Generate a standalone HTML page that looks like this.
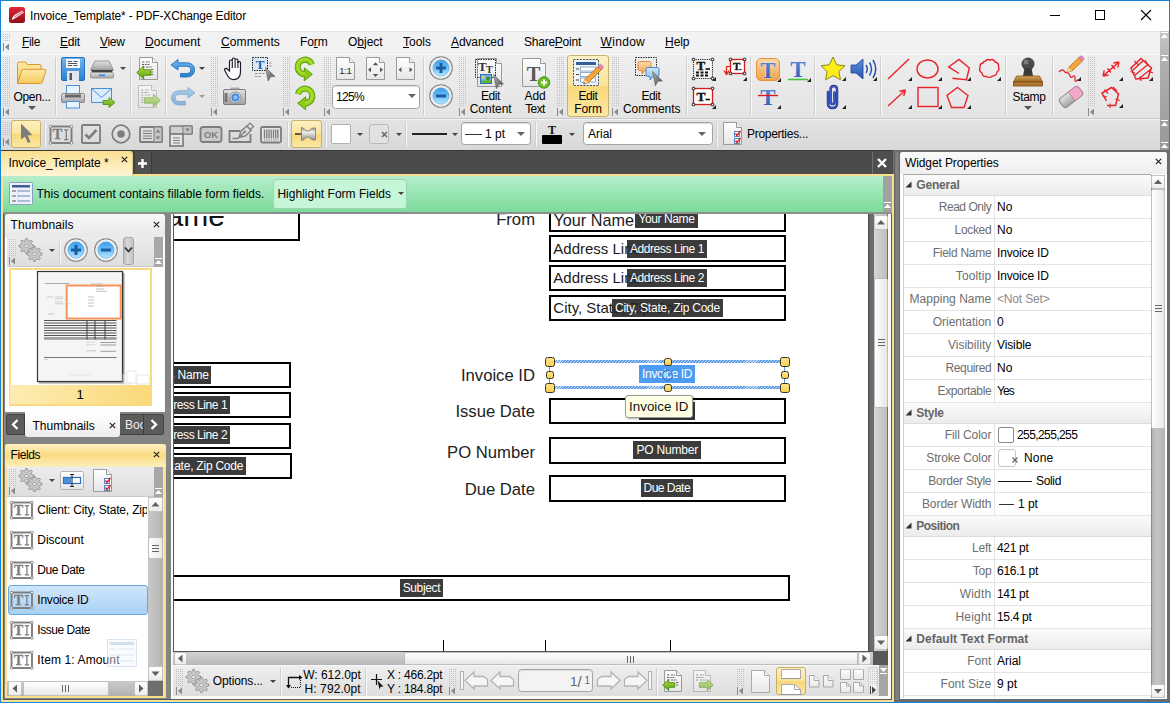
<!DOCTYPE html><html><head><meta charset="utf-8"><title>PDF-XChange Editor</title><style>
*{box-sizing:border-box;margin:0;padding:0}
html,body{width:1170px;height:703px;overflow:hidden;background:#fff}
body{position:relative;font-family:"Liberation Sans",sans-serif;font-size:12px;color:#000}
.a{position:absolute}
.t{position:absolute;white-space:nowrap;line-height:14px;height:14px}
.u{text-decoration:underline}
svg{position:absolute;overflow:visible}
#win{left:0;top:0;width:1170px;height:703px;border:1px solid #1883d7;background:#fff}
#menubar{left:1px;top:31px;width:1168px;height:23px;background:#f2f2f2;border-top:1px solid #e3e3e3}
#tb1{left:1px;top:54px;width:1168px;height:65px;background:linear-gradient(#eeeeee,#e4e4e4);border-top:1px solid #fafafa;border-bottom:1px solid #c9c9c9}
#tb2{left:1px;top:119px;width:1168px;height:31px;background:linear-gradient(#e3e3e3,#d8d8d8);border-top:1px solid #f2f2f2}
#tbr{left:1160px;top:31px;width:9px;height:119px;background:linear-gradient(#c8c8c8,#b0b0b0 25%,#989898)}
#work{left:1px;top:150px;width:1168px;height:552px;background:#6c6c6c}
.grip{position:absolute;width:7px;background-image:radial-gradient(circle,#a8a8a8 0.6px,transparent 0.9px);background-size:2px 2px}
.sep{position:absolute;width:2px;border-left:1px solid #cfcfcf;border-right:1px solid #f8f8f8}
.dd{position:absolute;width:0;height:0;border-left:3px solid transparent;border-right:3px solid transparent;border-top:3px solid #444}
.dd2{position:absolute;width:0;height:0;border-left:4px solid transparent;border-right:4px solid transparent;border-top:4px solid #555}
.act{position:absolute;border:1px solid #c9b06a;border-radius:3px;background:linear-gradient(#fdf0c2 0%,#fbe49a 48%,#f9d877 52%,#fbe9a8 100%)}
.combo{position:absolute;background:#fff;border:1px solid #a4a4a4;border-radius:3.500px;box-shadow:inset 0 1px 1px #dcdcdc}
.lbl{position:absolute;white-space:nowrap;line-height:13px;text-align:center;font-size:12px}
</style></head><body>
<div class="a" id="win"></div>
<svg width="0" height="0" style="left:0;top:0"><defs>
<linearGradient id="gFold" x1="0" y1="0" x2="0" y2="1"><stop offset="0" stop-color="#fde9a6"/><stop offset="1" stop-color="#f6c95c"/></linearGradient>
<linearGradient id="gBlue" x1="0" y1="0" x2="0" y2="1"><stop offset="0" stop-color="#6fb8ee"/><stop offset="1" stop-color="#2a7fd0"/></linearGradient>
<linearGradient id="gBlueL" x1="0" y1="0" x2="0" y2="1"><stop offset="0" stop-color="#cfe4f7"/><stop offset="1" stop-color="#8fbde6"/></linearGradient>
<linearGradient id="gGreen" x1="0" y1="0" x2="0" y2="1"><stop offset="0" stop-color="#b4e04a"/><stop offset="1" stop-color="#5a9e10"/></linearGradient>
<linearGradient id="gGreenL" x1="0" y1="0" x2="0" y2="1"><stop offset="0" stop-color="#d6ecad"/><stop offset="1" stop-color="#a9cf78"/></linearGradient>
<linearGradient id="gGray" x1="0" y1="0" x2="0" y2="1"><stop offset="0" stop-color="#e4e4e4"/><stop offset="1" stop-color="#a0a0a0"/></linearGradient>
<linearGradient id="gPage" x1="0" y1="0" x2="0" y2="1"><stop offset="0" stop-color="#ffffff"/><stop offset="1" stop-color="#e6e6e6"/></linearGradient>
<linearGradient id="gCirc" x1="0" y1="0" x2="0" y2="1"><stop offset="0" stop-color="#ffffff"/><stop offset="1" stop-color="#c9dcef"/></linearGradient>
<linearGradient id="gOr" x1="0" y1="0" x2="0" y2="1"><stop offset="0" stop-color="#fbd9a8"/><stop offset="1" stop-color="#f0a04a"/></linearGradient>
<linearGradient id="gWood" x1="0" y1="0" x2="0" y2="1"><stop offset="0" stop-color="#d9a35c"/><stop offset="1" stop-color="#9a6424"/></linearGradient>
<linearGradient id="gT" x1="0" y1="0" x2="0" y2="1"><stop offset="0" stop-color="#5c8fe0"/><stop offset="1" stop-color="#2a55b0"/></linearGradient>
<pattern id="dots" width="2" height="2" patternUnits="userSpaceOnUse"><rect width="1" height="1" fill="#c2c2c2"/></pattern>
<linearGradient id="gZ" x1="0" y1="0" x2="0" y2="1"><stop offset="0" stop-color="#3c9ce8"/><stop offset=".5" stop-color="#6cc0f8"/><stop offset="1" stop-color="#b4e6ff"/></linearGradient>
<linearGradient id="gPin" x1="0" y1="0" x2="0" y2="1"><stop offset="0" stop-color="#8c8c8c"/><stop offset=".35" stop-color="#f0f0f0"/><stop offset="1" stop-color="#8a8a8a"/></linearGradient>
<linearGradient id="gGrayL" x1="0" y1="0" x2="0" y2="1"><stop offset="0" stop-color="#f0f0f0"/><stop offset="1" stop-color="#bcbcbc"/></linearGradient>
<linearGradient id="gCur" x1="0" y1="0" x2="1" y2="1"><stop offset="0" stop-color="#b4b4b4"/><stop offset="1" stop-color="#4a4a4a"/></linearGradient>
</defs></svg>
<svg style="left:9px;top:7px" width="16" height="16" viewBox="0 0 16 16"><defs><linearGradient id="lg" x1="0" y1="0" x2="0" y2="1"><stop offset="0" stop-color="#e3263a"/><stop offset="1" stop-color="#8e1018"/></linearGradient></defs><rect width="16" height="16" rx="2.5" fill="url(#lg)"/><path d="M3 12.6l1.5-3.4 9-5 .9 1.4-8.6 5.6zM5.4 8.4l8-4.6" fill="#fff" stroke="#fff" stroke-width=".6"/><path d="M5.2 10.2l8.6-5.3" stroke="#b3202c" stroke-width=".7" fill="none"/></svg><div class="t" style="left:30px;top:9px;;letter-spacing:-0.143px">Invoice_Template* - PDF-XChange Editor</div><svg style="left:1050px;top:10px" width="12" height="12"><path d="M0 5.5h10" stroke="#000"/></svg><svg style="left:1095px;top:10px" width="12" height="12"><rect x=".5" y=".5" width="9" height="9" fill="none" stroke="#000"/></svg><svg style="left:1141px;top:10px" width="12" height="12"><path d="M0 0l10 10M10 0L0 10" stroke="#000" stroke-width="1.1"/></svg>
<div class="a" id="menubar"></div><svg style="left:3px;top:34px" width="7" height="8"><rect width="7" height="8" fill="url(#dots)"/></svg><svg style="left:3px;top:43px" width="7" height="8"><path d="M0.5 0v8" stroke="#8a8a8a" fill="none"/><path d="M6 0.5L2 4l4 3.5z" fill="#8a8a8a"/></svg><div class="t" style="left:22px;top:35px;;letter-spacing:-0.34px"><span class="u">F</span>ile</div><div class="t" style="left:60px;top:35px;;letter-spacing:-0.176px"><span class="u">E</span>dit</div><div class="t" style="left:100px;top:35px;;letter-spacing:-0.328px"><span class="u">V</span>iew</div><div class="t" style="left:145px;top:35px;;letter-spacing:0.1px"><span class="u">D</span>ocument</div><div class="t" style="left:221px;top:35px;;letter-spacing:0.121px"><span class="u">C</span>omments</div><div class="t" style="left:300px;top:35px;;letter-spacing:-0.079px">Fo<span class="u">r</span>m</div><div class="t" style="left:348px;top:35px;;letter-spacing:-0.003px">O<span class="u">b</span>ject</div><div class="t" style="left:403px;top:35px;;letter-spacing:-0.003px"><span class="u">T</span>ools</div><div class="t" style="left:451px;top:35px;;letter-spacing:-0.111px"><span class="u">A</span>dvanced</div><div class="t" style="left:524px;top:35px;;letter-spacing:-0.241px">Share<span class="u">P</span>oint</div><div class="t" style="left:600.5px;top:35px;;letter-spacing:0.319px"><span class="u">W</span>indow</div><div class="t" style="left:665px;top:35px;;letter-spacing:-0.047px"><span class="u">H</span>elp</div>
<div class="a" id="tb1"></div><svg style="left:3px;top:57px" width="7" height="49"><rect width="7" height="49" fill="url(#dots)"/></svg><svg style="left:3px;top:108px" width="7" height="8"><path d="M0.5 0v8" stroke="#8a8a8a" fill="none"/><path d="M6 0.5L2 4l4 3.5z" fill="#8a8a8a"/></svg><svg style="left:16px;top:60px" width="32" height="26" viewBox="0 0 32 26"><path d="M1.5 23.5V3.5q0-1.5 1.5-1.5h6.5l2 2.5h12q1.5 0 1.5 1.5v3" fill="url(#gFold)" stroke="#d9962c"/><path d="M1.5 23.5l4.2-13q.4-1.2 1.6-1.2h21.5q1.5 0 1.1 1.4l-3.6 11.6q-.4 1.2-1.6 1.2z" fill="url(#gFold)" stroke="#d9962c"/></svg><div class="lbl" style="left:-8px;width:80px;top:91px;;letter-spacing:-0.337px">Open...</div><div class="dd2" style="left:28px;top:106px"></div><div class="sep" style="left:55px;top:57px;height:58px"></div><svg style="left:61px;top:57px" width="24" height="24" viewBox="0 0 24 24"><rect x=".5" y=".5" width="23" height="23" rx="1.5" fill="url(#gBlue)" stroke="#1f6fbf"/><rect x="5" y="2" width="14" height="9" fill="#f4f8fc"/><path d="M7 4.5h4M12.5 4.5h4M7 6.5h9M7 8.5h4M12.5 8.5h4" stroke="#555" stroke-width="1"/><rect x="6" y="14" width="12" height="10" fill="#dfe8f2"/><rect x="8.5" y="16" width="2.5" height="7" fill="#555"/></svg><svg style="left:90px;top:58px" width="24" height="24" viewBox="0 0 24 24"><path d="M5 3h14l4.5 9h-23z" fill="url(#gGray)" stroke="#999"/><path d="M1 12h22l-1 2h-20z" fill="#444"/><rect x=".5" y="14.5" width="23" height="5.500" rx="1" fill="url(#gGray)" stroke="#999"/><rect x="9" y="16.500" width="6" height="1.500" fill="#2a8be6"/></svg><div class="dd" style="left:120px;top:67px;border-top-color:#444"></div><svg style="left:61px;top:85px" width="24" height="24" viewBox="0 0 24 24"><rect x="5.500" y=".5" width="13" height="9" fill="#e8f3fd" stroke="#4a90d9"/><rect x=".5" y="8.500" width="23" height="9" rx="1.500" fill="url(#gGray)" stroke="#8a8a8a"/><rect x="4" y="9.500" width="16" height="3" fill="#666"/><rect x="5.500" y="16.500" width="13" height="6.500" fill="#e8f3fd" stroke="#4a90d9"/></svg><svg style="left:91px;top:86px" width="26" height="24" viewBox="0 0 26 24"><rect x=".5" y="2.500" width="20" height="14" fill="#dcecfb" stroke="#4a90d9"/><path d="M.5 2.500l10 9 10-9" fill="none" stroke="#4a90d9"/><path d="M12 14.500h6v-3l6 5-6 5v-3h-6z" fill="url(#gGreen)" stroke="#4c8a0c" stroke-width=".8"/></svg><div class="sep" style="left:130px;top:57px;height:58px"></div><svg style="left:136px;top:57px" width="24" height="24" viewBox="0 0 24 24"><g transform="translate(3,0)"><path d="M.5 .5h13l5 5v17h-18z" fill="url(#gPage)" stroke="#9a9a9a"/><path d="M13.5 .5v5h5" fill="#f4f4f4" stroke="#9a9a9a"/><path d="M3 5h3M7 5h4M3 7.500h8M3 10h3M7 10h6M12 12.500h3M12 15h3M12 17.500h3" stroke="#666" stroke-dasharray="2 .7"/></g><path d="M.7 15.500l7-6.500v3.800h7v5.400h-7v3.800z" fill="url(#gGreen)" stroke="#4c8a0c" stroke-width=".9"/></svg><svg style="left:137px;top:85px" width="24" height="24" viewBox="0 0 24 24"><g opacity=".55"><g transform="translate(1,0)"><path d="M.5 .5h13l5 5v17h-18z" fill="url(#gPage)" stroke="#9a9a9a"/><path d="M13.5 .5v5h5" fill="#f4f4f4" stroke="#9a9a9a"/><path d="M3 5h3M7 5h4M3 7.500h8M3 10h3M7 10h6M3 12.500h3M3 15h3M3 17.500h3" stroke="#777" stroke-dasharray="2 .7"/></g><path d="M23.300 15.500l-7-6.500v3.800h-9v5.400h9v3.800z" fill="url(#gGreen)" stroke="#4c8a0c" stroke-width=".9"/></g></svg><div class="sep" style="left:165px;top:57px;height:58px"></div><svg style="left:170px;top:59px" width="26" height="20" viewBox="0 0 26 20"><g opacity="1"><path d="M1 6l7-5.500v3.300h8.500c5 0 8 2.800 8 7s-3 7.200-8 7.200h-6v-3.500h6c2.600 0 4.300-1.400 4.300-3.700s-1.700-3.500-4.300-3.500h-8.500v3.700z" fill="url(#gBlue)" stroke="#1f6fbf" stroke-width=".9"/></g></svg><div class="dd" style="left:199px;top:67px;border-top-color:#444"></div><svg style="left:170px;top:87px" width="26" height="20" viewBox="0 0 26 20"><g opacity="0.5" transform="translate(26,0) scale(-1,1)"><path d="M1 6l7-5.500v3.300h8.500c5 0 8 2.800 8 7s-3 7.200-8 7.200h-6v-3.500h6c2.600 0 4.300-1.400 4.300-3.700s-1.700-3.500-4.300-3.500h-8.500v3.700z" fill="url(#gBlue)" stroke="#1f6fbf" stroke-width=".9"/></g></svg><div class="dd" style="left:199px;top:95px;border-top-color:#999"></div><svg style="left:211px;top:57px" width="7" height="49"><rect width="7" height="49" fill="url(#dots)"/></svg><svg style="left:211px;top:108px" width="7" height="8"><path d="M0.5 0v8" stroke="#8a8a8a" fill="none"/><path d="M6 0.5L2 4l4 3.5z" fill="#8a8a8a"/></svg><svg style="left:223px;top:57px" width="22" height="24" viewBox="0 0 22 24"><path d="M6.500 14V4.500q0-1.500 1.400-1.500t1.400 1.500V2.500q0-1.500 1.400-1.500t1.400 1.500V3.500q0-1.500 1.400-1.500t1.400 1.500V6q0-1.400 1.300-1.400t1.300 1.400V15q0 4-2.200 6t-5.800 1.500q-3-.5-4.600-3.300L1.800 13.500q-.7-1.300.4-1.900t2 .4z" fill="#fff" stroke="#1a1a2a" stroke-width="1.200"/><path d="M9.300 4.500V11M12.100 3.500V11M14.900 4.500V11" stroke="#1a1a2a" stroke-width="1.100"/></svg><svg style="left:252px;top:57px" width="24" height="24" viewBox="0 0 24 24"><rect x=".5" y=".5" width="15" height="13" fill="#d9e8f5" stroke="#222" stroke-dasharray="1.500 1"/><path d="M3 16.500h10M3 19.500h7M17 6h3M17 9h3" stroke="#999" stroke-dasharray="2.500 1"/><text x="8" y="11.500" font-family="Liberation Serif,serif" font-weight="bold" font-size="13" fill="#1f5fae" text-anchor="middle">T</text><path d="M13.500 10.500l9.500 9-4.500.3-2.300 4.200z" fill="url(#gCur)" stroke="#4a4a4a" stroke-width=".5"/></svg><svg style="left:223px;top:87px" width="24" height="20" viewBox="0 0 24 20"><rect x="8" y="1" width="8" height="3" fill="#bbb" stroke="#888" stroke-width=".6"/><rect x=".5" y="2.500" width="22" height="15" rx="1.500" fill="url(#gGray)" stroke="#7d7d7d"/><rect x="1.500" y="6" width="3" height="9" fill="#777"/><circle cx="12.500" cy="10.500" r="5.500" fill="#e8e8e8" stroke="#888"/><circle cx="12.500" cy="10.500" r="3.800" fill="#4d94e8" stroke="#2a6bc0" stroke-width=".6"/><circle cx="12.500" cy="10.500" r="2" fill="#8fc0f5"/></svg><svg style="left:283px;top:57px" width="7" height="49"><rect width="7" height="49" fill="url(#dots)"/></svg><svg style="left:283px;top:108px" width="7" height="8"><path d="M0.5 0v8" stroke="#8a8a8a" fill="none"/><path d="M6 0.5L2 4l4 3.5z" fill="#8a8a8a"/></svg><svg style="left:292px;top:55px" width="26" height="28" viewBox="0 0 26 28"><path d="M19.860 9.500A7.300 7.300 0 1 0 13 19.300" fill="none" stroke="#5c9c0c" stroke-width="6.200"/><path d="M12.300 12.800L20.300 19.300l-8 6.500z" fill="#8ccc14" stroke="#5c9c0c" stroke-width="1"/><path d="M19.860 9.500A7.300 7.300 0 1 0 13 19.300" fill="none" stroke="#96d418" stroke-width="4.400"/><path d="M19.860 9.500A7.300 7.300 0 1 0 13 19.300" fill="none" stroke="#b6e64a" stroke-width="1.200" transform="translate(0,-.8)" opacity=".7"/></svg><svg style="left:292px;top:83.5px" width="26" height="28" viewBox="0 0 26 28"><path d="M5.950 10.100A7.300 7.300 0 1 1 13 19.300" fill="none" stroke="#5c9c0c" stroke-width="6.200"/><path d="M13.700 12.800L5.700 19.300l8 6.500z" fill="#8ccc14" stroke="#5c9c0c" stroke-width="1"/><path d="M5.950 10.100A7.300 7.300 0 1 1 13 19.300" fill="none" stroke="#96d418" stroke-width="4.400"/><path d="M5.950 10.100A7.300 7.300 0 1 1 13 19.300" fill="none" stroke="#b6e64a" stroke-width="1.200" transform="translate(0,-.8)" opacity=".7"/></svg><svg style="left:324px;top:57px" width="7" height="49"><rect width="7" height="49" fill="url(#dots)"/></svg><svg style="left:324px;top:108px" width="7" height="8"><path d="M0.5 0v8" stroke="#8a8a8a" fill="none"/><path d="M6 0.5L2 4l4 3.5z" fill="#8a8a8a"/></svg><svg style="left:336px;top:57.2px" width="20" height="24" viewBox="0 0 20 24"><path d="M.5 .5h13l5 5v17h-18z" fill="url(#gPage)" stroke="#9a9a9a"/><path d="M13.5 .5v5h5" fill="#f4f4f4" stroke="#9a9a9a"/><text x="9.300" y="16.800" font-size="9.500" font-family="Liberation Sans,sans-serif" text-anchor="middle" fill="#2a2a2a" letter-spacing="-.3">1:1</text></svg><svg style="left:366px;top:57.2px" width="20" height="24" viewBox="0 0 20 24"><path d="M.5 .5h13l5 5v17h-18z" fill="url(#gPage)" stroke="#9a9a9a"/><path d="M13.5 .5v5h5" fill="#f4f4f4" stroke="#9a9a9a"/><path d="M9.500 5.300l-2.700 3h5.400zM9.500 20l-2.700-3h5.400zM2 12.700l3-2.500v5zM17 12.700l-3-2.500v5z" fill="#555"/></svg><svg style="left:396px;top:57.2px" width="20" height="24" viewBox="0 0 20 24"><path d="M.5 .5h13l5 5v17h-18z" fill="url(#gPage)" stroke="#9a9a9a"/><path d="M13.5 .5v5h5" fill="#f4f4f4" stroke="#9a9a9a"/><path d="M2.500 12.700l3-2.500v5zM16.500 12.700l-3-2.500v5z" fill="#555"/></svg><div class="combo" style="left:332px;top:85px;width:88px;height:24px"></div><div class="t" style="left:336px;top:90px;;letter-spacing:-0.676px">125%</div><div class="dd2" style="left:407.500px;top:94px;border-top-color:#666"></div><div class="sep" style="left:423px;top:57px;height:58px"></div><svg style="left:428.5px;top:56.2px" width="24" height="24" viewBox="0 0 24 24"><circle cx="12" cy="12" r="11.200" fill="#fff" stroke="#8a8a8a" stroke-width="1.300"/><circle cx="12" cy="12" r="9.800" fill="none" stroke="#ececec" stroke-width="1.400"/><circle cx="12" cy="12" r="8.200" fill="url(#gZ)" stroke="#5aa0dc" stroke-width=".6"/><path d="M7 12h10" stroke="#1a5c9e" stroke-width="3"/><path d="M12 7v10" stroke="#1a5c9e" stroke-width="3"/></svg><svg style="left:428.5px;top:84.4px" width="24" height="24" viewBox="0 0 24 24"><circle cx="12" cy="12" r="11.200" fill="#fff" stroke="#8a8a8a" stroke-width="1.300"/><circle cx="12" cy="12" r="9.800" fill="none" stroke="#ececec" stroke-width="1.400"/><circle cx="12" cy="12" r="8.200" fill="url(#gZ)" stroke="#5aa0dc" stroke-width=".6"/><path d="M7 12h10" stroke="#1a5c9e" stroke-width="3"/></svg><svg style="left:459px;top:57px" width="7" height="49"><rect width="7" height="49" fill="url(#dots)"/></svg><svg style="left:459px;top:108px" width="7" height="8"><path d="M0.5 0v8" stroke="#8a8a8a" fill="none"/><path d="M6 0.5L2 4l4 3.5z" fill="#8a8a8a"/></svg><svg style="left:474px;top:57px" width="32" height="32" viewBox="0 0 32 32"><g transform="translate(3,1)"><path d="M.5 .5h19l5 5v23h-24z" fill="url(#gPage)" stroke="#9a9a9a"/><path d="M19.5 .5v5h5" fill="#f4f4f4" stroke="#9a9a9a"/></g><rect x="1.500" y="2.500" width="20" height="18" fill="none" stroke="#222" stroke-dasharray="1.500 1"/><text x="4" y="14" font-family="Liberation Serif,serif" font-weight="bold" font-size="13" fill="#333">T</text><text x="12" y="16" font-family="Liberation Serif,serif" font-weight="bold" font-size="10" fill="#333">T</text><rect x="6.500" y="17.500" width="11" height="9" fill="#6db3ee" stroke="#2a72c0"/><path d="M7 26v-2.500h10V26z" fill="#6bb12a"/><circle cx="14" cy="21.500" r="2" fill="#3f8f1a"/><rect x="8" y="19" width="2.500" height="2.500" fill="#f7d23a"/><path d="M19.500 17.500l10 9.500-4.700.3-2.400 4.400z" fill="url(#gCur)" stroke="#4a4a4a" stroke-width=".5"/></svg><div class="lbl" style="left:450.5px;width:80px;top:90px;;letter-spacing:-0.422px">Edit</div><div class="lbl" style="left:450.7px;width:80px;top:103px;;letter-spacing:-0.004px">Content</div><svg style="left:521px;top:56.5px" width="30" height="32" viewBox="0 0 30 32"><g transform="translate(1,1)"><path d="M.5 .5h18l5 5v23h-23z" fill="url(#gPage)" stroke="#9a9a9a"/><path d="M18.5 .5v5h5" fill="#f4f4f4" stroke="#9a9a9a"/></g><text x="12.500" y="24" font-family="Liberation Serif,serif" font-weight="bold" font-size="20.500" fill="#585858" text-anchor="middle">T</text><circle cx="23" cy="25.500" r="5.700" fill="#6cc024" stroke="#3f8a10"/><path d="M20 25.500h6M23 22.500v6" stroke="#fff" stroke-width="2"/></svg><div class="lbl" style="left:495px;width:80px;top:90px;;letter-spacing:-0.186px">Add</div><div class="lbl" style="left:495px;width:80px;top:103px;;letter-spacing:-0.604px">Text</div><svg style="left:557px;top:57px" width="7" height="49"><rect width="7" height="49" fill="url(#dots)"/></svg><svg style="left:557px;top:108px" width="7" height="8"><path d="M0.5 0v8" stroke="#8a8a8a" fill="none"/><path d="M6 0.5L2 4l4 3.5z" fill="#8a8a8a"/></svg><div class="act" style="left:567px;top:55px;width:42px;height:62px"></div><svg style="left:572px;top:57px" width="32" height="32" viewBox="0 0 32 32"><rect x="1.500" y="2.500" width="25" height="26" fill="#eef3f9" stroke="#34506e" stroke-dasharray="2 1.200"/><rect x="4" y="5" width="20" height="3" fill="#34609a"/><path d="M4 12h3M4 17.500h3M4 23h3" stroke="#444"/><rect x="8.500" y="10" width="15" height="4" fill="#fff" stroke="#7a9cc6" stroke-width=".8"/><rect x="8.500" y="15.500" width="15" height="4" fill="#fff" stroke="#7a9cc6" stroke-width=".8"/><rect x="8.500" y="21" width="15" height="4" fill="#fff" stroke="#7a9cc6" stroke-width=".8"/><path d="M11.500 27l1.200-4.500L26 9.500l3.300 3.300L16 26z" fill="#f4a63a" stroke="#b8721a" stroke-width=".8"/><path d="M26 9.500l1.500-1.500q1-.8 2 0l1.300 1.300q.8 1 0 2l-1.500 1.500z" fill="#e08ac0" stroke="#a85a90" stroke-width=".6"/><path d="M11.500 27l1.200-4.500 3.300 3.500z" fill="#f2dcb0"/><path d="M11.500 27l.5-1.800 1.300 1.300z" fill="#333"/></svg><div class="lbl" style="left:548px;width:80px;top:90px;;letter-spacing:-0.422px">Edit</div><div class="lbl" style="left:548px;width:80px;top:103px;;letter-spacing:-0.075px">Form</div><svg style="left:612px;top:57px" width="7" height="49"><rect width="7" height="49" fill="url(#dots)"/></svg><svg style="left:612px;top:108px" width="7" height="8"><path d="M0.5 0v8" stroke="#8a8a8a" fill="none"/><path d="M6 0.5L2 4l4 3.5z" fill="#8a8a8a"/></svg><svg style="left:634px;top:57px" width="32" height="32" viewBox="0 0 32 32"><rect x="1.500" y=".5" width="21" height="18" fill="none" stroke="#222" stroke-dasharray="1.500 1"/><path d="M5.500 4.500h10q1.500 0 1.500 1.500v6q0 1.500-1.500 1.500h-4.500l-3 3.500v-3.500h-2.500q-1.500 0-1.500-1.500v-6q0-1.500 1.500-1.500z" fill="url(#gOr)" stroke="#e0853a" stroke-width=".9"/><path d="M13.500 10.500h10q1.500 0 1.500 1.500v6q0 1.500-1.500 1.500h-4.500l-3 3.500v-3.500h-2.500q-1.500 0-1.500-1.500v-6q0-1.500 1.500-1.500z" fill="url(#gBlueL)" stroke="#3a80d0" stroke-width=".9"/><path d="M18.500 14.500l10 9.500-4.700.3-2.400 4.400z" fill="url(#gCur)" stroke="#4a4a4a" stroke-width=".5"/></svg><div class="lbl" style="left:611px;width:80px;top:90px;;letter-spacing:-0.422px">Edit</div><div class="lbl" style="left:611.7px;width:80px;top:103px;;letter-spacing:-0.089px">Comments</div><div class="sep" style="left:686px;top:57px;height:58px"></div><svg style="left:692px;top:58px" width="24" height="22" viewBox="0 0 24 22"><rect x="1.500" y="1.500" width="19" height="19" fill="#f2f2f2" stroke="#222" stroke-dasharray="1.200 1"/><rect x="0.19999999999999996" y="0.19999999999999996" width="2.600" height="2.600" rx=".8" fill="#fff" stroke="#111" stroke-width=".9"/><rect x="19.2" y="0.19999999999999996" width="2.600" height="2.600" rx=".8" fill="#fff" stroke="#111" stroke-width=".9"/><rect x="0.19999999999999996" y="19.2" width="2.600" height="2.600" rx=".8" fill="#fff" stroke="#111" stroke-width=".9"/><rect x="19.2" y="19.2" width="2.600" height="2.600" rx=".8" fill="#fff" stroke="#111" stroke-width=".9"/><text x="4.500" y="12" font-family="Liberation Serif,serif" font-weight="bold" font-size="13" fill="#111" stroke="#111" stroke-width=".4">T</text><path d="M13.500 11h4.500" stroke="#111" stroke-width="1.600"/><path d="M4 14.500h3M8.500 14.500h3M13 14.500h4M4 17.500h3M8.500 17.500h3M13 17.500h4" stroke="#111" stroke-width="2" stroke-dasharray="3 1.500"/></svg><svg style="left:712px;top:77px" width="4" height="4"><path d="M4 0v4H0z" fill="#222"/></svg><svg style="left:722px;top:58px" width="24" height="22" viewBox="0 0 24 22"><rect x="8.500" y="1.500" width="14" height="14" fill="#fff" stroke="#e01818" stroke-width="1.300"/><rect x="7.2" y="0.19999999999999996" width="2.600" height="2.600" rx=".8" fill="#fff" stroke="#111" stroke-width=".9"/><rect x="21.2" y="0.19999999999999996" width="2.600" height="2.600" rx=".8" fill="#fff" stroke="#111" stroke-width=".9"/><rect x="7.2" y="14.2" width="2.600" height="2.600" rx=".8" fill="#fff" stroke="#111" stroke-width=".9"/><rect x="21.2" y="14.2" width="2.600" height="2.600" rx=".8" fill="#fff" stroke="#111" stroke-width=".9"/><text x="11" y="12" font-family="Liberation Serif,serif" font-weight="bold" font-size="11" fill="#111" stroke="#111" stroke-width=".3">T</text><path d="M17.500 11.500h2" stroke="#111" stroke-width="1.200"/><path d="M8 8.500H4.500v7.500M2 12.500l2.500 4 2.500-4" fill="none" stroke="#e01818" stroke-width="1.200"/></svg><svg style="left:743px;top:77px" width="4" height="4"><path d="M4 0v4H0z" fill="#222"/></svg><svg style="left:692px;top:87px" width="24" height="22" viewBox="0 0 24 22"><rect x="1.500" y="1.500" width="19" height="16" fill="#fff" stroke="#e01818" stroke-width="1.300"/><rect x="0.19999999999999996" y="0.19999999999999996" width="2.600" height="2.600" rx=".8" fill="#fff" stroke="#111" stroke-width=".9"/><rect x="19.2" y="0.19999999999999996" width="2.600" height="2.600" rx=".8" fill="#fff" stroke="#111" stroke-width=".9"/><rect x="0.19999999999999996" y="16.2" width="2.600" height="2.600" rx=".8" fill="#fff" stroke="#111" stroke-width=".9"/><rect x="19.2" y="16.2" width="2.600" height="2.600" rx=".8" fill="#fff" stroke="#111" stroke-width=".9"/><text x="4.500" y="13.500" font-family="Liberation Serif,serif" font-weight="bold" font-size="13.500" fill="#111" stroke="#111" stroke-width=".4">T</text><path d="M13.500 12.500h4.500" stroke="#111" stroke-width="1.600"/></svg><svg style="left:712px;top:105px" width="4" height="4"><path d="M4 0v4H0z" fill="#222"/></svg><div class="sep" style="left:750px;top:57px;height:58px"></div><svg style="left:756px;top:58px" width="24" height="24" viewBox="0 0 24 24"><rect x=".5" y=".5" width="23" height="22" rx="4.500" fill="url(#gOr)" stroke="#e8913a"/><text x="12" y="20" font-family="Liberation Serif,serif" font-weight="bold" font-size="23" fill="url(#gT)" text-anchor="middle" stroke="#fff" stroke-width=".6" paint-order="stroke">T</text></svg><svg style="left:777px;top:78px" width="4" height="4"><path d="M4 0v4H0z" fill="#222"/></svg><svg style="left:786px;top:58px" width="24" height="24" viewBox="0 0 24 24"><text x="12" y="19" font-family="Liberation Serif,serif" font-weight="bold" font-size="23" fill="url(#gT)" text-anchor="middle">T</text><path d="M2 21.500h20" stroke="#45c23a" stroke-width="1.600"/></svg><svg style="left:807px;top:78px" width="4" height="4"><path d="M4 0v4H0z" fill="#222"/></svg><svg style="left:756px;top:85px" width="24" height="24" viewBox="0 0 24 24"><text x="12" y="20" font-family="Liberation Serif,serif" font-weight="bold" font-size="23" fill="url(#gT)" text-anchor="middle">T</text><path d="M2 10.500h20" stroke="#e01818" stroke-width="1.400"/></svg><svg style="left:777px;top:105px" width="4" height="4"><path d="M4 0v4H0z" fill="#222"/></svg><div class="sep" style="left:814px;top:57px;height:58px"></div><svg style="left:820px;top:56px" width="26" height="24" viewBox="0 0 26 24"><path d="M13 1l3.700 7.800 8.300 1-6.200 5.700 1.700 8.300-7.500-4.200-7.500 4.200 1.700-8.300L1 9.800l8.300-1z" fill="#fbee1a" stroke="#8a8a10" stroke-width="1"/></svg><svg style="left:842px;top:77px" width="4" height="4"><path d="M4 0v4H0z" fill="#222"/></svg><svg style="left:850px;top:58px" width="28" height="22" viewBox="0 0 28 22"><path d="M1 7h5l7-6v20l-7-6H1z" fill="url(#gT)" stroke="#1f3f9a" stroke-width=".8"/><path d="M16 7q2.500 4 0 8M19.500 4.500q4 6.500 0 13M23 2q5.500 9 0 18" fill="none" stroke="#2a55b0" stroke-width="1.500"/></svg><svg style="left:873px;top:77px" width="4" height="4"><path d="M4 0v4H0z" fill="#222"/></svg><svg style="left:826px;top:84px" width="14" height="26" viewBox="0 0 14 26"><path d="M2 8v11.500q0 4.500 4.500 4.500t4.500-4.500V5.500q0-3.500-3.200-3.500T4.600 5.500V18q0 2 1.900 2t1.900-2V8.500" fill="none" stroke="#1c3690" stroke-width="2.500" stroke-linecap="round"/><path d="M2 8v11.500q0 4.500 4.500 4.500t4.500-4.500V5.500q0-3.500-3.200-3.500T4.600 5.500V18q0 2 1.900 2t1.900-2V8.500" fill="none" stroke="#4c6cd8" stroke-width=".9" stroke-linecap="round"/></svg><svg style="left:842px;top:105px" width="4" height="4"><path d="M4 0v4H0z" fill="#222"/></svg><div class="sep" style="left:880px;top:57px;height:58px"></div><svg style="left:887px;top:58px" width="24" height="23" viewBox="0 0 24 23"><path d="M1 21L22 1" stroke="#e8242a" stroke-width="1.400"/></svg><svg style="left:907.5px;top:77px" width="4" height="4"><path d="M4 0v4H0z" fill="#222"/></svg><svg style="left:916px;top:58.2px" width="24" height="23" viewBox="0 0 24 23"><ellipse cx="11.500" cy="11" rx="10.500" ry="9" fill="none" stroke="#e8242a" stroke-width="1.400"/></svg><svg style="left:937.5px;top:77px" width="4" height="4"><path d="M4 0v4H0z" fill="#222"/></svg><svg style="left:946px;top:58px" width="24" height="23" viewBox="0 0 24 23"><path d="M6.400 20.200L20.500 21.700 23.300 9.900 13 1.400 2.600 8.900 13 15.500" fill="none" stroke="#e8242a" stroke-width="1.400"/></svg><svg style="left:967.3px;top:77px" width="4" height="4"><path d="M4 0v4H0z" fill="#222"/></svg><svg style="left:977px;top:58px" width="24" height="23" viewBox="0 0 24 23"><path d="M8 3.500q2-3 5-1.500 3.500-1.500 5 2 4 .5 3.500 4.500 1.500 3.500-1.500 5.500-.5 4-4.500 4-3 2.500-6 .5-4 .5-4.500-3.500-3.500-2-2-5.500-.5-4 3-4.500.5-2 2-1.500z" fill="none" stroke="#e8242a" stroke-width="1.400"/></svg><svg style="left:997px;top:77px" width="4" height="4"><path d="M4 0v4H0z" fill="#222"/></svg><svg style="left:887px;top:85px" width="24" height="23" viewBox="0 0 24 23"><path d="M1 21L18.500 5M18.500 5l-6 1.200M18.500 5l-1.800 6" stroke="#e8242a" stroke-width="1.400" fill="none"/></svg><svg style="left:907.5px;top:104.5px" width="4" height="4"><path d="M4 0v4H0z" fill="#222"/></svg><svg style="left:917px;top:86px" width="24" height="23" viewBox="0 0 24 23"><rect x="1" y="1.500" width="20" height="19" fill="none" stroke="#e8242a" stroke-width="1.400"/></svg><svg style="left:937.5px;top:104.5px" width="4" height="4"><path d="M4 0v4H0z" fill="#222"/></svg><svg style="left:946px;top:86px" width="24" height="23" viewBox="0 0 24 23"><path d="M11.500 1.500L22 9.500l-4 12H5.500L1 9.500z" fill="none" stroke="#e8242a" stroke-width="1.400"/></svg><svg style="left:967.3px;top:104.5px" width="4" height="4"><path d="M4 0v4H0z" fill="#222"/></svg><div class="sep" style="left:1005px;top:57px;height:58px"></div><svg style="left:1012px;top:57px" width="32" height="30" viewBox="0 0 32 30"><circle cx="16" cy="7" r="6.500" fill="#4a4a4a"/><circle cx="14" cy="5" r="2.500" fill="#7a7a7a"/><path d="M12.500 11h7l1.500 8h-10z" fill="#3a3a3a"/><path d="M4.500 19h23l3 6h-29z" fill="url(#gWood)" stroke="#8a5a20" stroke-width=".8"/><rect x="1.500" y="25" width="29" height="4" fill="#b07830" stroke="#7a4a18" stroke-width=".8"/></svg><div class="lbl" style="left:989px;width:80px;top:91px;;letter-spacing:-0.338px">Stamp</div><div class="dd2" style="left:1024px;top:106px"></div><div class="sep" style="left:1052px;top:57px;height:58px"></div><svg style="left:1058px;top:56px" width="28" height="26" viewBox="0 0 28 26"><path d="M9 16l1.500-4.500L21 1.500l3.500 3.500L14 15z" fill="#f4a63a" stroke="#b8721a" stroke-width=".8"/><path d="M21 1.500l1.300-1.200q1-.6 2 .2l1.200 1.200q.8 1 0 2L24.500 5z" fill="#e08ac0" stroke="#a85a90" stroke-width=".6"/><path d="M9 16l1.500-4.500L14 15z" fill="#f2dcb0"/><path d="M1 16q3-3.500 5-1t3.500 1.500q2 1 2.500 3.500t3 .5 2 2.500 3 .5" fill="none" stroke="#e8242a" stroke-width="1.300"/></svg><svg style="left:1077px;top:77px" width="4" height="4"><path d="M4 0v4H0z" fill="#222"/></svg><svg style="left:1058px;top:85px" width="26" height="24" viewBox="0 0 26 24"><g transform="rotate(-38 13 12)"><rect x="1" y="6.500" width="24" height="11" rx="3" fill="url(#gGray)" stroke="#8a8a8a"/><path d="M14 6.500h8q3 0 3 3v5q0 3-3 3h-8z" fill="#f2a8c8" stroke="#c07898" stroke-width=".8"/></g></svg><svg style="left:1088px;top:57px" width="7" height="49"><rect width="7" height="49" fill="url(#dots)"/></svg><svg style="left:1088px;top:108px" width="7" height="8"><path d="M0.5 0v8" stroke="#8a8a8a" fill="none"/><path d="M6 0.5L2 4l4 3.5z" fill="#8a8a8a"/></svg><svg style="left:1101px;top:59px" width="24" height="24" viewBox="0 0 24 24"><path d="M2 17L18 3M2 17l1.200-5.500M2 17l5.500-1M18 3l-5.500 1M18 3l-1.200 5.500M6.500 9.500l3.500 4M10.500 6l3.500 4" stroke="#e8242a" stroke-width="1.400" fill="none"/></svg><svg style="left:1119px;top:77px" width="4" height="4"><path d="M4 0v4H0z" fill="#222"/></svg><svg style="left:1130px;top:57px" width="24" height="24" viewBox="0 0 24 24"><path d="M11 1.500l10.500 9.500-3.600 10-12 1L1 11z" fill="none" stroke="#e8242a" stroke-width="1.500"/><path d="M3 13L13.500 3.500M4.500 18.500L18 7.500M9 21.500L20.500 12.500" stroke="#e8242a" stroke-width="1.300"/><path d="M4.500 4l4 4M15 3l3 5M18 14l5 2M10 19.500l1 4.500M.5 14.500l4.500 1.500" stroke="#e8242a" stroke-width="1.200"/></svg><svg style="left:1149px;top:77px" width="4" height="4"><path d="M4 0v4H0z" fill="#222"/></svg><svg style="left:1101px;top:86px" width="24" height="24" viewBox="0 0 24 24"><path d="M6 19.500h8.500l3-11.500L10.500 1.500 1 7l4.500 8" fill="none" stroke="#e8242a" stroke-width="1.500"/><path d="M9 17.500v4.500M14.500 13l4.500 1.500M12 1l4 4M3.500 3.500l3.500 4M1.500 10l4.500 1" stroke="#e8242a" stroke-width="1.200"/></svg><svg style="left:1119px;top:104px" width="4" height="4"><path d="M4 0v4H0z" fill="#222"/></svg>
<div class="a" id="tb2"></div><svg style="left:3px;top:122px" width="7" height="14"><rect width="7" height="14" fill="url(#dots)"/></svg><svg style="left:3px;top:138px" width="7" height="8"><path d="M0.5 0v8" stroke="#8a8a8a" fill="none"/><path d="M6 0.5L2 4l4 3.5z" fill="#8a8a8a"/></svg><div class="act" style="left:11px;top:120px;width:30px;height:28px"></div><svg style="left:20px;top:123px" width="14" height="22" viewBox="0 0 14 22"><path d="M1 .5l11.500 11.500-4.800.4 2.800 6.500-2.600 1.200-2.800-6.500L1 16.500z" fill="#7d7d7d"/></svg><div class="sep" style="left:44px;top:122px;height:25px"></div><svg style="left:49px;top:124.5px" width="24" height="19.5" viewBox="0 0 24 19.5"><rect x="1.500" y="1.500" width="21" height="16.5" fill="none" stroke="#7d7d7d" stroke-width="1.900"/><circle cx="1.5" cy="1.5" r="1.300" fill="#fff" stroke="#7d7d7d" stroke-width=".8"/><circle cx="22.5" cy="1.5" r="1.300" fill="#fff" stroke="#7d7d7d" stroke-width=".8"/><circle cx="1.5" cy="18.0" r="1.300" fill="#fff" stroke="#7d7d7d" stroke-width=".8"/><circle cx="22.5" cy="18.0" r="1.300" fill="#fff" stroke="#7d7d7d" stroke-width=".8"/><text x="8.64" y="14.45" font-family="Liberation Serif,serif" font-weight="bold" font-size="14.4" fill="#7d7d7d" stroke="#7d7d7d" stroke-width=".35" text-anchor="middle">T</text><path d="M17.28 5.07v9.36M15.080000000000002 4.875h4.400M15.080000000000002 14.625h4.400" stroke="#7d7d7d" stroke-width="1.300" fill="none"/></svg><svg style="left:81px;top:124px" width="20" height="20" viewBox="0 0 20 20"><rect x="1" y="1" width="18" height="18" rx="1" fill="none" stroke="#7d7d7d" stroke-width="1.800"/><path d="M4.500 10.500l3.500 3.500 7.500-8" fill="none" stroke="#7d7d7d" stroke-width="2.600"/></svg><svg style="left:111px;top:124px" width="20" height="20" viewBox="0 0 20 20"><circle cx="10" cy="10" r="8.800" fill="none" stroke="#7d7d7d" stroke-width="1.700"/><circle cx="10" cy="10" r="3.800" fill="#7d7d7d"/></svg><svg style="left:139px;top:126px" width="24" height="17" viewBox="0 0 24 17"><rect x="1" y="1" width="22" height="15" rx="1" fill="none" stroke="#7d7d7d" stroke-width="1.800"/><rect x="15" y="1" width="8" height="15" fill="#c4c4c4" stroke="#7d7d7d" stroke-width="1"/><path d="M4 5h9M4 7.500h9M4 10h9M4 12.500h9" stroke="#7d7d7d" stroke-width="1"/><path d="M19 3.500l-2.300 3h4.600zM19 13.500l-2.300-3h4.600z" fill="#7d7d7d"/></svg><svg style="left:169px;top:124.5px" width="24" height="22" viewBox="0 0 24 22"><rect x="1" y="1" width="22" height="8" rx="1" fill="#d0d0d0" stroke="#7d7d7d" stroke-width="1.700"/><rect x="14" y="1" width="9" height="8" fill="#c4c4c4" stroke="#7d7d7d" stroke-width="1"/><path d="M18.500 6.500l-2.300-3h4.600z" fill="#7d7d7d"/><rect x="1" y="9" width="13" height="12" fill="#e6e6e6" stroke="#7d7d7d" stroke-width="1.700"/><path d="M4 13h7M4 15.500h7M4 18h7" stroke="#7d7d7d" stroke-width="1"/></svg><svg style="left:199px;top:126px" width="24" height="17" viewBox="0 0 24 17"><rect x="1.500" y="1" width="21" height="15" rx="2.500" fill="#c9c9c9" stroke="#7d7d7d" stroke-width="1.800"/><text x="12" y="12.300" font-family="Liberation Sans,sans-serif" font-weight="bold" font-size="9.500" fill="#7d7d7d" text-anchor="middle">OK</text></svg><svg style="left:228px;top:122px" width="26" height="22" viewBox="0 0 26 22"><path d="M12 9H1.500v11h21v-8" fill="none" stroke="#7d7d7d" stroke-width="1.800"/><path d="M4.500 16.500h6" stroke="#7d7d7d" stroke-width="1.400"/><path d="M11 15.500l2-6.500 6-5 4 4.500-5.500 5.500z" fill="#dcdcdc" stroke="#7d7d7d" stroke-width="1.300"/><path d="M19 4l3-3 3.500 3.500-3 3M11 15.500l5.500-5.500" fill="none" stroke="#7d7d7d" stroke-width="1.200"/><circle cx="16.800" cy="9.800" r="1.200" fill="#7d7d7d"/></svg><svg style="left:260px;top:125.5px" width="22" height="18" viewBox="0 0 22 18"><rect x="1" y="1" width="20" height="15.500" rx="1.500" fill="#e4e4e4" stroke="#7d7d7d" stroke-width="1.800"/><path d="M4.500 3.500v9M6.800 3.500v9M9 3.500v9M11.200 3.500v9M13.500 3.500v9M15.700 3.500v9M17.800 3.500v9" stroke="#7d7d7d" stroke-width="1.300"/><path d="M4 14h14.500" stroke="#7d7d7d" stroke-width="1" stroke-dasharray="1.300 1"/></svg><div class="sep" style="left:287px;top:122px;height:25px"></div><div class="act" style="left:291px;top:120px;width:31px;height:28px"></div><svg style="left:295px;top:125.5px" width="24" height="16" viewBox="0 0 24 16"><path d="M0 8h7" stroke="#222" stroke-width="1.400"/><path d="M6.500 1.500q2.500 0 3.500 2.500 1 1 2.500 1t2.500-1q1-2 3.500-2h2v12h-2q-2.500 0-3.500-2-1-1-2.500-1t-2.500 1q-1 2.500-3.500 2.500z" fill="url(#gPin)" stroke="#7a7a7a" stroke-width=".8"/></svg><div class="sep" style="left:325px;top:122px;height:25px"></div><div class="a" style="left:331px;top:124px;width:20px;height:20px;background:#fff;border:1px solid #b0b0b0;border-radius:2px"></div><div class="dd" style="left:357px;top:133px;border-top-color:#444"></div><div class="a" style="left:369px;top:124px;width:20px;height:20px;background:#e2e2e2;border:1px solid #b8b8b8;border-radius:3px"></div><svg style="left:381px;top:131px" width="7" height="7" viewBox="0 0 7 7"><path d="M1 1l5 5M6 1L1 6" stroke="#666" stroke-width="1.500"/></svg><div class="dd" style="left:396px;top:133px;border-top-color:#444"></div><div class="sep" style="left:405px;top:122px;height:25px"></div><div class="a" style="left:412px;top:133px;width:35px;height:2px;background:#222"></div><div class="dd" style="left:452px;top:133px;border-top-color:#444"></div><div class="combo" style="left:461px;top:122px;width:70px;height:23px"></div><div class="a" style="left:465px;top:134px;width:17px;height:1px;background:#333"></div><div class="t" style="left:485px;top:127px;;letter-spacing:-0.004px">1 pt</div><div class="dd2" style="left:517px;top:132px;border-top-color:#666"></div><div class="sep" style="left:535px;top:122px;height:25px"></div><svg style="left:541px;top:123px" width="22" height="22" viewBox="0 0 22 22"><text x="11" y="10.500" font-family="Liberation Serif,serif" font-weight="bold" font-size="12" text-anchor="middle" fill="#111">T</text><rect x="1" y="12" width="20" height="9" rx="1" fill="#000"/></svg><div class="dd" style="left:569px;top:133px;border-top-color:#444"></div><div class="combo" style="left:583px;top:122px;width:130px;height:23px"></div><div class="t" style="left:588px;top:127px;;letter-spacing:-0.003px">Arial</div><div class="dd2" style="left:698px;top:132px;border-top-color:#666"></div><div class="sep" style="left:716px;top:122px;height:25px"></div><svg style="left:723px;top:122px" width="20" height="24" viewBox="0 0 20 24"><path d="M.5 .5h13l5 5v17h-18z" fill="url(#gPage)" stroke="#9a9a9a"/><path d="M13.5 .5v5h5" fill="#f4f4f4" stroke="#9a9a9a"/><rect x="11.500" y="9.500" width="5" height="5" fill="#fff" stroke="#4a7ac0" stroke-width=".9"/><rect x="11.500" y="16.500" width="5" height="5" fill="#fff" stroke="#4a7ac0" stroke-width=".9"/><path d="M12.500 11.500l1.500 2 3.500-4.500M12.500 18.500l1.500 2 3.500-4.500" fill="none" stroke="#d8202a" stroke-width="1.400"/></svg><div class="t" style="left:747px;top:127px;;letter-spacing:-0.285px">Properties...</div><div class="a" id="tbr"></div><svg style="left:1161px;top:32px" width="7" height="7" viewBox="0 0 7 7"><path d="M0 .5h7" stroke="#fff"/><path d="M3.500 2L0 6h7z" fill="#fff"/></svg><svg style="left:1161px;top:55px" width="7" height="7" viewBox="0 0 7 7"><path d="M0 .5h7" stroke="#fff"/><path d="M3.500 2L0 6h7z" fill="#fff"/></svg><svg style="left:1161px;top:120px" width="7" height="7" viewBox="0 0 7 7"><path d="M0 .5h7" stroke="#fff"/><path d="M3.500 2L0 6h7z" fill="#fff"/></svg><svg style="left:1161px;top:142px" width="7" height="7" viewBox="0 0 7 7"><path d="M0 .5h7" stroke="#fff"/><path d="M3.500 2L0 6h7z" fill="#fff"/></svg>
<div class="a" id="work"></div>
<div class="a" style="left:1px;top:150px;width:892px;height:24px;background:#4b4b4b;border-top:1px solid #3a3a3a"></div><div class="a" style="left:1px;top:174px;width:893px;height:528px;background:#848484;border:2px solid #f7e08e;box-shadow:inset 0 0 0 1px #5a5a5a"></div><div class="a" style="left:171px;top:212px;width:720px;height:487px;background:#fafafa"></div><div class="a" style="left:894px;top:152px;width:6px;height:548px;background:linear-gradient(90deg,#5c5c5c,#828282 35%,#808080 70%,#606060)"></div><div class="a" style="left:1px;top:151px;width:132px;height:25px;background:linear-gradient(#fbdf8d,#fdeab0 45%,#fef5d8);border-radius:0 3px 0 0;border-right:1px solid #d9c78a"></div><div class="t" style="left:8.5px;top:156px;;letter-spacing:-0.077px">Invoice_Template *</div><svg style="left:121.3px;top:156.4px" width="7" height="7" viewBox="0 0 7 7"><path d="M.8 .8l5.400 5.400M6.200 .8L.8 6.200" stroke="#222" stroke-width="1.150"/></svg><div class="a" style="left:134px;top:152px;width:18px;height:22px;border-right:1px solid #3a3a3a;border-left:1px solid #3a3a3a;background:#505050"></div><svg style="left:137px;top:158px" width="11" height="11" viewBox="0 0 11 11"><path d="M5.500 1v9M1 5.500h9" stroke="#fff" stroke-width="2.400"/></svg><div class="a" style="left:872px;top:152px;width:20px;height:22px;border-left:1px solid #707070;background:#4e4e4e"></div><svg style="left:877px;top:158px" width="10" height="10" viewBox="0 0 10 10"><path d="M1 1l8 8M9 1L1 9" stroke="#fff" stroke-width="2.400"/></svg><div class="a" style="left:3px;top:176px;width:880px;height:36px;background:linear-gradient(#b6eeca,#9be6b5 45%,#7cdb9b)"></div><div class="a" style="left:883px;top:176px;width:9px;height:36px;background:#a2a2a2"></div><svg style="left:884px;top:202px" width="7" height="7" viewBox="0 0 7 7"><path d="M0 .5h7" stroke="#fff"/><path d="M3.500 2L0 6h7z" fill="#fff"/></svg><div class="a" style="left:3px;top:212px;width:889px;height:2px;background:#8e8e8e"></div><svg style="left:9px;top:182px" width="24" height="24" viewBox="0 0 24 24"><rect x=".5" y=".5" width="23" height="22" rx="1" fill="#eef3fb" stroke="#8aa2c8"/><rect x="3" y="3" width="18" height="2.500" fill="#3d5f96"/><path d="M3 9h4M3 14h4M3 19h4" stroke="#555" stroke-width="1"/><path d="M9 9h12M9 14h12M9 19h12" stroke="#6a86b8" stroke-width="1"/><path d="M9 7.500v3M9 12.500v3M9 17.500v3" stroke="#9ab0d4" stroke-width=".8"/></svg><div class="t" style="left:36.5px;top:187px;;letter-spacing:0.043px">This document contains fillable form fields.</div><div class="a" style="left:273px;top:179px;width:134px;height:30px;background:#c6f6d8;border:1px solid #9fd4b3;border-radius:3px"></div><div class="t" style="left:277.4px;top:187px;;letter-spacing:0.015px">Highlight Form Fields</div><div class="dd" style="left:398px;top:192px;border-top-color:#444"></div>
<div class="a" style="left:5px;top:214px;width:160px;height:198px;background:#fff;border:1px solid #fafafa;border-radius:3px 3px 0 0"></div><div class="a" style="left:5px;top:214px;width:160px;height:23px;background:linear-gradient(#f8f8f8,#e9e9e9);border-radius:3px 3px 0 0"></div><div class="t" style="left:10.6px;top:218px;;letter-spacing:0.097px">Thumbnails</div><svg style="left:152.8px;top:220.5px" width="7" height="7" viewBox="0 0 7 7"><path d="M.8 .8l5.400 5.400M6.200 .8L.8 6.200" stroke="#222" stroke-width="1.150"/></svg><div class="a" style="left:7px;top:237px;width:156px;height:30px;background:linear-gradient(#ececec,#dedede);border-bottom:1px solid #c8c8c8"></div><svg style="left:9px;top:239px" width="7" height="17"><rect width="7" height="17" fill="url(#dots)"/></svg><svg style="left:9px;top:257px" width="7" height="8"><path d="M0.5 0v8" stroke="#8a8a8a" fill="none"/><path d="M6 0.5L2 4l4 3.5z" fill="#8a8a8a"/></svg><svg style="left:18px;top:238px" width="26" height="24" viewBox="0 0 26 24"><path d="M16.0 7.2L16.0 8.8L13.7 9.5L13.2 10.6L14.4 12.7L13.2 13.9L11.1 12.7L10.0 13.2L9.3 15.5L7.7 15.5L7.0 13.2L5.9 12.7L3.8 13.9L2.6 12.7L3.8 10.6L3.3 9.5L1.0 8.8L1.0 7.2L3.3 6.5L3.8 5.4L2.6 3.3L3.8 2.1L5.9 3.3L7.0 2.8L7.7 0.5L9.3 0.5L10.0 2.8L11.1 3.3L13.2 2.1L14.4 3.3L13.2 5.4L13.7 6.5z" fill="#cfcfcf" stroke="#8e8e8e" stroke-width=".9"/><circle cx="8.5" cy="8" r="3.8" fill="none" stroke="#b4b4b4" stroke-width=".8"/><circle cx="8.5" cy="8" r="1.8" fill="#efefef" stroke="#8e8e8e" stroke-width=".8"/><path d="M24.0 15.2L24.0 16.8L21.7 17.5L21.2 18.6L22.4 20.7L21.2 21.9L19.1 20.7L18.0 21.2L17.3 23.5L15.7 23.5L15.0 21.2L13.9 20.7L11.8 21.9L10.6 20.7L11.8 18.6L11.3 17.5L9.0 16.8L9.0 15.2L11.3 14.5L11.8 13.4L10.6 11.3L11.8 10.1L13.9 11.3L15.0 10.8L15.7 8.5L17.3 8.5L18.0 10.8L19.1 11.3L21.2 10.1L22.4 11.3L21.2 13.4L21.7 14.5z" fill="#cfcfcf" stroke="#8e8e8e" stroke-width=".9"/><circle cx="16.5" cy="16" r="3.8" fill="none" stroke="#b4b4b4" stroke-width=".8"/><circle cx="16.5" cy="16" r="1.8" fill="#efefef" stroke="#8e8e8e" stroke-width=".8"/></svg><div class="dd" style="left:49px;top:249px;border-top-color:#444"></div><div class="sep" style="left:59px;top:240px;height:24px"></div><svg style="left:64px;top:238px" width="24" height="24" viewBox="0 0 24 24"><circle cx="12" cy="12" r="11.200" fill="#fff" stroke="#8a8a8a" stroke-width="1.300"/><circle cx="12" cy="12" r="9.800" fill="none" stroke="#ececec" stroke-width="1.400"/><circle cx="12" cy="12" r="8.200" fill="url(#gZ)" stroke="#5aa0dc" stroke-width=".6"/><path d="M7 12h10" stroke="#1a5c9e" stroke-width="3"/><path d="M12 7v10" stroke="#1a5c9e" stroke-width="3"/></svg><svg style="left:94px;top:238px" width="24" height="24" viewBox="0 0 24 24"><circle cx="12" cy="12" r="11.200" fill="#fff" stroke="#8a8a8a" stroke-width="1.300"/><circle cx="12" cy="12" r="9.800" fill="none" stroke="#ececec" stroke-width="1.400"/><circle cx="12" cy="12" r="8.200" fill="url(#gZ)" stroke="#5aa0dc" stroke-width=".6"/><path d="M7 12h10" stroke="#1a5c9e" stroke-width="3"/></svg><div class="a" style="left:123px;top:237px;width:11px;height:28px;background:linear-gradient(90deg,#bdbdbd,#d8d8d8 40%,#c4c4c4);border:1px solid #a8a8a8;border-radius:3px"></div><svg style="left:124px;top:246px" width="9" height="8" viewBox="0 0 9 8"><path d="M1 1.500l3.500 4 3.500-4" fill="none" stroke="#333" stroke-width="1.800"/></svg><div class="a" style="left:154px;top:237px;width:9px;height:30px;background:#a8a8a8"></div><svg style="left:155px;top:258px" width="7" height="7" viewBox="0 0 7 7"><path d="M0 .5h7" stroke="#fff"/><path d="M3.500 2L0 6h7z" fill="#fff"/></svg><div class="a" style="left:8.500px;top:267.500px;width:143px;height:138px;background:#fff;border:2px solid #f9da80"></div><div class="a" style="left:10px;top:385px;width:141px;height:19px;background:linear-gradient(90deg,#fdecb4,#fbd978)"></div><div class="t" style="left:76.5px;top:387.5px;font-size:13px">1</div><svg style="left:37px;top:271px" width="86" height="111" viewBox="0 0 86 111"><rect x="2" y="2" width="86" height="111" fill="#000" opacity=".18"/><rect x="1.200" y="1.200" width="86" height="111" fill="#000" opacity=".22"/><rect x=".5" y=".5" width="85" height="110" fill="#f5f5f5" stroke="#333" stroke-width="1.200"/><rect x="29.700" y="14.500" width="54" height="33" fill="#fff" stroke="#f8965a" stroke-width="2"/><path d="M8 12.5h24" stroke="#999" stroke-width="0.8"/><path d="M54 12.8h12" stroke="#aaa" stroke-width="0.6"/><path d="M59 15h8" stroke="#999" stroke-width="0.6"/><path d="M59 18h8" stroke="#999" stroke-width="0.6"/><path d="M59 20.3h11" stroke="#999" stroke-width="0.6"/><path d="M18 26h8" stroke="#aaa" stroke-width="0.5"/><path d="M18 27.8h8" stroke="#aaa" stroke-width="0.5"/><path d="M18 31h8" stroke="#aaa" stroke-width="0.5"/><path d="M18 32.8h8" stroke="#aaa" stroke-width="0.5"/><path d="M10 26h6" stroke="#aaa" stroke-width="0.5"/><path d="M26 32.8h10" stroke="#ccc" stroke-width="0.5"/><path d="M51 26h6" stroke="#999" stroke-width="0.6"/><path d="M51 29h6" stroke="#999" stroke-width="0.6"/><path d="M51 32h6" stroke="#999" stroke-width="0.6"/><path d="M51 35h6" stroke="#999" stroke-width="0.6"/><path d="M11 43h6" stroke="#aaa" stroke-width="0.6"/><path d="M7 49.5h72.5" stroke="#555" stroke-width="1"/><path d="M7 52h72.5" stroke="#555" stroke-width="1"/><path d="M7 54.5h72.5" stroke="#555" stroke-width="1"/><path d="M7 57h72.5" stroke="#555" stroke-width="1"/><path d="M7 59.5h72.5" stroke="#555" stroke-width="1"/><path d="M7 62h72.5" stroke="#555" stroke-width="1"/><path d="M7 64.5h72.5" stroke="#555" stroke-width="1"/><path d="M7 67h72.5" stroke="#555" stroke-width="1"/><path d="M7 68.3h72.5" stroke="#777" stroke-width="0.7"/><path d="M50 49v19.500M58 49v19.500M68 49v19.500" stroke="#333" stroke-width=".9"/><path d="M63.5 71.5h15.5" stroke="#777" stroke-width="0.7"/><path d="M49 71.2h9" stroke="#bbb" stroke-width="0.5"/><path d="M63.5 74h15.5" stroke="#777" stroke-width="0.7"/><path d="M49 73.7h9" stroke="#bbb" stroke-width="0.5"/><path d="M63.5 80.3h15.5" stroke="#777" stroke-width="0.7"/><path d="M49 79.8h10" stroke="#aaa" stroke-width="0.6"/><path d="M7 86.5h72.5" stroke="#777" stroke-width="1"/><path d="M7 88.5h4" stroke="#aaa" stroke-width="0.5"/><path d="M33 104h20" stroke="#ccc" stroke-width="0.5"/></svg><svg style="left:121px;top:369px" width="30" height="16" viewBox="0 0 30 16"><g opacity=".35"><rect x="1" y="5" width="9" height="10" fill="#fff" stroke="#bbb"/><rect x="6" y="2" width="9" height="12" fill="#fff" stroke="#bbb"/><rect x="16" y="6" width="12" height="9" fill="#fff" stroke="#bbb"/></g></svg><div class="a" style="left:6px;top:414px;width:158px;height:21px;background:#5c5c5c;border:1px solid #444;border-radius:2px"></div><div class="a" style="left:24px;top:414px;width:1px;height:21px;background:#3e3e3e"></div><div class="a" style="left:143px;top:414px;width:1px;height:21px;background:#3e3e3e"></div><svg style="left:11px;top:419px" width="8" height="11" viewBox="0 0 8 11"><path d="M6.500 1L2 5.500 6.500 10" fill="none" stroke="#fff" stroke-width="2.300"/></svg><svg style="left:150px;top:419px" width="8" height="11" viewBox="0 0 8 11"><path d="M1.500 1L6 5.500 1.500 10" fill="none" stroke="#fff" stroke-width="2.300"/></svg><div class="a" style="left:25px;top:412px;width:95px;height:25px;background:linear-gradient(#ffffff,#ededed);border-radius:0 0 3px 3px"></div><div class="t" style="left:32.4px;top:419px;;letter-spacing:0.037px">Thumbnails</div><svg style="left:108.8px;top:421.5px" width="7" height="7" viewBox="0 0 7 7"><path d="M.8 .8l5.400 5.400M6.200 .8L.8 6.200" stroke="#222" stroke-width="1.150"/></svg><div class="t" style="left:125px;top:418px;color:#f0f0f0;width:18px;overflow:hidden">Boo</div><div class="a" style="left:5px;top:444px;width:161px;height:254px;background:#e6e6e6;border:2px solid #f9e08c;border-radius:3px 3px 0 0"></div><div class="a" style="left:5px;top:444px;width:161px;height:23px;background:linear-gradient(#fdefc0,#fbdc84 50%,#fdeebb);border-radius:3px 3px 0 0"></div><div class="t" style="left:10.6px;top:448px;;letter-spacing:-0.419px">Fields</div><svg style="left:152.8px;top:450.5px" width="7" height="7" viewBox="0 0 7 7"><path d="M.8 .8l5.400 5.400M6.200 .8L.8 6.200" stroke="#222" stroke-width="1.150"/></svg><div class="a" style="left:7px;top:467px;width:156px;height:30px;background:linear-gradient(#ececec,#dedede);border-bottom:1px solid #c8c8c8"></div><svg style="left:9px;top:469px" width="7" height="17"><rect width="7" height="17" fill="url(#dots)"/></svg><svg style="left:9px;top:487px" width="7" height="8"><path d="M0.5 0v8" stroke="#8a8a8a" fill="none"/><path d="M6 0.5L2 4l4 3.5z" fill="#8a8a8a"/></svg><svg style="left:18px;top:468px" width="26" height="24" viewBox="0 0 26 24"><path d="M16.0 7.2L16.0 8.8L13.7 9.5L13.2 10.6L14.4 12.7L13.2 13.9L11.1 12.7L10.0 13.2L9.3 15.5L7.7 15.5L7.0 13.2L5.9 12.7L3.8 13.9L2.6 12.7L3.8 10.6L3.3 9.5L1.0 8.8L1.0 7.2L3.3 6.5L3.8 5.4L2.6 3.3L3.8 2.1L5.9 3.3L7.0 2.8L7.7 0.5L9.3 0.5L10.0 2.8L11.1 3.3L13.2 2.1L14.4 3.3L13.2 5.4L13.7 6.5z" fill="#cfcfcf" stroke="#8e8e8e" stroke-width=".9"/><circle cx="8.5" cy="8" r="3.8" fill="none" stroke="#b4b4b4" stroke-width=".8"/><circle cx="8.5" cy="8" r="1.8" fill="#efefef" stroke="#8e8e8e" stroke-width=".8"/><path d="M24.0 15.2L24.0 16.8L21.7 17.5L21.2 18.6L22.4 20.7L21.2 21.9L19.1 20.7L18.0 21.2L17.3 23.5L15.7 23.5L15.0 21.2L13.9 20.7L11.8 21.9L10.6 20.7L11.8 18.6L11.3 17.5L9.0 16.8L9.0 15.2L11.3 14.5L11.8 13.4L10.6 11.3L11.8 10.1L13.9 11.3L15.0 10.8L15.7 8.5L17.3 8.5L18.0 10.8L19.1 11.3L21.2 10.1L22.4 11.3L21.2 13.4L21.7 14.5z" fill="#cfcfcf" stroke="#8e8e8e" stroke-width=".9"/><circle cx="16.5" cy="16" r="3.8" fill="none" stroke="#b4b4b4" stroke-width=".8"/><circle cx="16.5" cy="16" r="1.8" fill="#efefef" stroke="#8e8e8e" stroke-width=".8"/></svg><div class="dd" style="left:49px;top:479px;border-top-color:#444"></div><svg style="left:60px;top:471px" width="25" height="20" viewBox="0 0 25 20"><rect x=".5" y=".5" width="23" height="18" rx="1" fill="url(#gPage)" stroke="#b4b4b4"/><rect x="3.500" y="6.500" width="17" height="6" fill="#fff" stroke="#2a6fc0" stroke-width="1.200"/><rect x="4" y="7" width="7" height="5" fill="#4a90d9"/><path d="M12 3.500v12M10 3.500h4M10 15.500h4" stroke="#222" stroke-width="1"/></svg><svg style="left:93px;top:469px" width="20" height="24" viewBox="0 0 20 24"><path d="M.5 .5h13l5 5v17h-18z" fill="url(#gPage)" stroke="#9a9a9a"/><path d="M13.5 .5v5h5" fill="#f4f4f4" stroke="#9a9a9a"/><rect x="11.500" y="9.500" width="5" height="5" fill="#fff" stroke="#4a7ac0" stroke-width=".9"/><rect x="11.500" y="16.500" width="5" height="5" fill="#fff" stroke="#4a7ac0" stroke-width=".9"/><path d="M12.500 11.500l1.500 2 3.500-4.500M12.500 18.500l1.500 2 3.500-4.500" fill="none" stroke="#d8202a" stroke-width="1.400"/></svg><div class="a" style="left:154px;top:467px;width:9px;height:30px;background:#a8a8a8"></div><svg style="left:155px;top:488px" width="7" height="7" viewBox="0 0 7 7"><path d="M0 .5h7" stroke="#fff"/><path d="M3.500 2L0 6h7z" fill="#fff"/></svg><div class="a" style="left:7px;top:497px;width:141px;height:184px;background:#fff"></div><svg style="left:10.3px;top:501.2px" width="23.5" height="18.5" viewBox="0 0 23.5 18.5"><rect x="1.500" y="1.500" width="20.5" height="15.5" fill="none" stroke="#7d7d7d" stroke-width="1.900"/><circle cx="1.5" cy="1.5" r="1.300" fill="#fff" stroke="#7d7d7d" stroke-width=".8"/><circle cx="22.0" cy="1.5" r="1.300" fill="#fff" stroke="#7d7d7d" stroke-width=".8"/><circle cx="1.5" cy="17.0" r="1.300" fill="#fff" stroke="#7d7d7d" stroke-width=".8"/><circle cx="22.0" cy="17.0" r="1.300" fill="#fff" stroke="#7d7d7d" stroke-width=".8"/><text x="8.459999999999999" y="13.95" font-family="Liberation Serif,serif" font-weight="bold" font-size="13.7" fill="#7d7d7d" stroke="#7d7d7d" stroke-width=".35" text-anchor="middle">T</text><path d="M16.919999999999998 4.8100000000000005v8.879999999999999M14.719999999999999 4.625h4.400M14.719999999999999 13.875h4.400" stroke="#7d7d7d" stroke-width="1.300" fill="none"/></svg><div class="t" style="left:37.3px;top:503px;max-width:110px;overflow:hidden;letter-spacing:-0.173px">Client: City, State, Zip</div><svg style="left:10.3px;top:531.2px" width="23.5" height="18.5" viewBox="0 0 23.5 18.5"><rect x="1.500" y="1.500" width="20.5" height="15.5" fill="none" stroke="#7d7d7d" stroke-width="1.900"/><circle cx="1.5" cy="1.5" r="1.300" fill="#fff" stroke="#7d7d7d" stroke-width=".8"/><circle cx="22.0" cy="1.5" r="1.300" fill="#fff" stroke="#7d7d7d" stroke-width=".8"/><circle cx="1.5" cy="17.0" r="1.300" fill="#fff" stroke="#7d7d7d" stroke-width=".8"/><circle cx="22.0" cy="17.0" r="1.300" fill="#fff" stroke="#7d7d7d" stroke-width=".8"/><text x="8.459999999999999" y="13.95" font-family="Liberation Serif,serif" font-weight="bold" font-size="13.7" fill="#7d7d7d" stroke="#7d7d7d" stroke-width=".35" text-anchor="middle">T</text><path d="M16.919999999999998 4.8100000000000005v8.879999999999999M14.719999999999999 4.625h4.400M14.719999999999999 13.875h4.400" stroke="#7d7d7d" stroke-width="1.300" fill="none"/></svg><div class="t" style="left:37.3px;top:533px;max-width:110px;overflow:hidden;letter-spacing:-0.023px">Discount</div><svg style="left:10.3px;top:561.2px" width="23.5" height="18.5" viewBox="0 0 23.5 18.5"><rect x="1.500" y="1.500" width="20.5" height="15.5" fill="none" stroke="#7d7d7d" stroke-width="1.900"/><circle cx="1.5" cy="1.5" r="1.300" fill="#fff" stroke="#7d7d7d" stroke-width=".8"/><circle cx="22.0" cy="1.5" r="1.300" fill="#fff" stroke="#7d7d7d" stroke-width=".8"/><circle cx="1.5" cy="17.0" r="1.300" fill="#fff" stroke="#7d7d7d" stroke-width=".8"/><circle cx="22.0" cy="17.0" r="1.300" fill="#fff" stroke="#7d7d7d" stroke-width=".8"/><text x="8.459999999999999" y="13.95" font-family="Liberation Serif,serif" font-weight="bold" font-size="13.7" fill="#7d7d7d" stroke="#7d7d7d" stroke-width=".35" text-anchor="middle">T</text><path d="M16.919999999999998 4.8100000000000005v8.879999999999999M14.719999999999999 4.625h4.400M14.719999999999999 13.875h4.400" stroke="#7d7d7d" stroke-width="1.300" fill="none"/></svg><div class="t" style="left:37.3px;top:563px;max-width:110px;overflow:hidden;letter-spacing:-0.425px">Due Date</div><div class="a" style="left:8px;top:585px;width:140px;height:30px;background:linear-gradient(#cfe6fb,#a9d1f5);border:1px solid #6aa7e0;border-radius:3px"></div><svg style="left:10.3px;top:591.2px" width="23.5" height="18.5" viewBox="0 0 23.5 18.5"><rect x="1.500" y="1.500" width="20.5" height="15.5" fill="none" stroke="#7d7d7d" stroke-width="1.900"/><circle cx="1.5" cy="1.5" r="1.300" fill="#fff" stroke="#7d7d7d" stroke-width=".8"/><circle cx="22.0" cy="1.5" r="1.300" fill="#fff" stroke="#7d7d7d" stroke-width=".8"/><circle cx="1.5" cy="17.0" r="1.300" fill="#fff" stroke="#7d7d7d" stroke-width=".8"/><circle cx="22.0" cy="17.0" r="1.300" fill="#fff" stroke="#7d7d7d" stroke-width=".8"/><text x="8.459999999999999" y="13.95" font-family="Liberation Serif,serif" font-weight="bold" font-size="13.7" fill="#7d7d7d" stroke="#7d7d7d" stroke-width=".35" text-anchor="middle">T</text><path d="M16.919999999999998 4.8100000000000005v8.879999999999999M14.719999999999999 4.625h4.400M14.719999999999999 13.875h4.400" stroke="#7d7d7d" stroke-width="1.300" fill="none"/></svg><div class="t" style="left:37.3px;top:593px;max-width:110px;overflow:hidden;letter-spacing:-0.216px">Invoice ID</div><svg style="left:10.3px;top:621.2px" width="23.5" height="18.5" viewBox="0 0 23.5 18.5"><rect x="1.500" y="1.500" width="20.5" height="15.5" fill="none" stroke="#7d7d7d" stroke-width="1.900"/><circle cx="1.5" cy="1.5" r="1.300" fill="#fff" stroke="#7d7d7d" stroke-width=".8"/><circle cx="22.0" cy="1.5" r="1.300" fill="#fff" stroke="#7d7d7d" stroke-width=".8"/><circle cx="1.5" cy="17.0" r="1.300" fill="#fff" stroke="#7d7d7d" stroke-width=".8"/><circle cx="22.0" cy="17.0" r="1.300" fill="#fff" stroke="#7d7d7d" stroke-width=".8"/><text x="8.459999999999999" y="13.95" font-family="Liberation Serif,serif" font-weight="bold" font-size="13.7" fill="#7d7d7d" stroke="#7d7d7d" stroke-width=".35" text-anchor="middle">T</text><path d="M16.919999999999998 4.8100000000000005v8.879999999999999M14.719999999999999 4.625h4.400M14.719999999999999 13.875h4.400" stroke="#7d7d7d" stroke-width="1.300" fill="none"/></svg><div class="t" style="left:37.3px;top:623px;max-width:110px;overflow:hidden;letter-spacing:-0.458px">Issue Date</div><svg style="left:10.3px;top:651.2px" width="23.5" height="18.5" viewBox="0 0 23.5 18.5"><rect x="1.500" y="1.500" width="20.5" height="15.5" fill="none" stroke="#7d7d7d" stroke-width="1.900"/><circle cx="1.5" cy="1.5" r="1.300" fill="#fff" stroke="#7d7d7d" stroke-width=".8"/><circle cx="22.0" cy="1.5" r="1.300" fill="#fff" stroke="#7d7d7d" stroke-width=".8"/><circle cx="1.5" cy="17.0" r="1.300" fill="#fff" stroke="#7d7d7d" stroke-width=".8"/><circle cx="22.0" cy="17.0" r="1.300" fill="#fff" stroke="#7d7d7d" stroke-width=".8"/><text x="8.459999999999999" y="13.95" font-family="Liberation Serif,serif" font-weight="bold" font-size="13.7" fill="#7d7d7d" stroke="#7d7d7d" stroke-width=".35" text-anchor="middle">T</text><path d="M16.919999999999998 4.8100000000000005v8.879999999999999M14.719999999999999 4.625h4.400M14.719999999999999 13.875h4.400" stroke="#7d7d7d" stroke-width="1.300" fill="none"/></svg><div class="t" style="left:37.3px;top:653px;max-width:110px;overflow:hidden;letter-spacing:0.113px">Item 1: Amount</div><svg style="left:107px;top:639px" width="30" height="28" viewBox="0 0 30 28"><g opacity=".45"><rect x=".5" y=".5" width="29" height="27" fill="#f4f8fd" stroke="#a9c4e4"/><rect x="3" y="3" width="24" height="3" fill="#9ab4d4"/><path d="M3 10h6M3 16h6M3 22h6" stroke="#bbb"/><path d="M11 10h16M11 16h16M11 22h16" stroke="#a9c4e4"/></g></svg><div class="a" style="left:148px;top:497px;width:15px;height:184px;background:linear-gradient(90deg,#c8c8c8,#bebebe 60%,#b0b0b0)"></div><div class="a" style="left:148px;top:497px;width:15px;height:15px;background:linear-gradient(#fff,#ececec);border:1px solid #c4c4c4;border-radius:2px"></div><svg style="left:148px;top:497px" width="15" height="15" viewBox="0 0 15 15"><path d="M7.5 5.0l-4 4.500h8z" fill="#606060"/></svg><div class="a" style="left:148px;top:666px;width:15px;height:15px;background:linear-gradient(#fff,#ececec);border:1px solid #c4c4c4;border-radius:2px"></div><svg style="left:148px;top:666px" width="15" height="15" viewBox="0 0 15 15"><path d="M7.5 10.0l-4-4.500h8z" fill="#606060"/></svg><div class="a" style="left:148px;top:537px;width:15px;height:22px;background:linear-gradient(90deg,#fff,#e8e8e8);border:1px solid #c0c0c0;border-radius:2px"></div><svg style="left:152px;top:545px" width="7" height="7" viewBox="0 0 7 7"><path d="M0 .5h7M0 3.500h7M0 6.500h7" stroke="#666"/></svg><div class="a" style="left:7px;top:681px;width:156px;height:15px;background:#6e6e6e"></div><div class="a" style="left:7px;top:681px;width:141px;height:15px;background:linear-gradient(#cacaca,#bcbcbc 60%,#b0b0b0)"></div><div class="a" style="left:8px;top:681px;width:14px;height:15px;background:linear-gradient(#fff,#ececec);border:1px solid #c4c4c4;border-radius:2px"></div><svg style="left:8px;top:681px" width="14" height="15" viewBox="0 0 14 15"><path d="M4.5 7.5l4.500-4v8z" fill="#606060"/></svg><div class="a" style="left:134px;top:681px;width:14px;height:15px;background:linear-gradient(#fff,#ececec);border:1px solid #c4c4c4;border-radius:2px"></div><svg style="left:134px;top:681px" width="14" height="15" viewBox="0 0 14 15"><path d="M9.5 7.5l-4.500-4v8z" fill="#606060"/></svg><div class="a" style="left:23px;top:681px;width:86px;height:15px;background:linear-gradient(#fff,#e8e8e8);border:1px solid #c0c0c0;border-radius:2px"></div><svg style="left:62px;top:685px" width="7" height="7" viewBox="0 0 7 7"><path d="M.5 0v7M3.500 0v7M6.500 0v7" stroke="#666"/></svg>
<div class="a" style="left:173px;top:214px;width:715px;height:452px;background:#585858"></div><div class="a" id="page" style="left:174px;top:214px;width:694px;height:437px;background:#fff;overflow:hidden"><div class="a" style="left:-74px;top:-24px;width:200px;height:51px;border:2px solid #000;background:#fff;"></div><div class="a" style="left:-249.2px;width:300px;text-align:right;top:-15.399999999999999px;font-size:30px;line-height:34px;color:#111;white-space:nowrap">Your Company Name</div><div class="a" style="left:0;top:0;width:124px;height:2px;background:#fff"></div><div class="a" style="left:375px;top:-9px;width:237px;height:27px;border:2px solid #000;background:#fff;"></div><div class="a" style="left:375px;top:21px;width:237px;height:27px;border:2px solid #000;background:#fff;"></div><div class="a" style="left:375px;top:51px;width:237px;height:26px;border:2px solid #000;background:#fff;"></div><div class="a" style="left:375px;top:81px;width:237px;height:26px;border:2px solid #000;background:#fff;"></div><div class="a" style="left:379.5px;top:-4.5px;line-height:20px;font-size:15px;color:#1a1a1a;white-space:nowrap;font-size:16.200px">Your Name</div><div class="a" style="left:379.29999999999995px;top:24.599999999999994px;line-height:20px;font-size:15px;color:#1a1a1a;white-space:nowrap;">Address Line 1</div><div class="a" style="left:379.29999999999995px;top:54.30000000000001px;line-height:20px;font-size:15px;color:#1a1a1a;white-space:nowrap;">Address Line 2</div><div class="a" style="left:379.29999999999995px;top:84.30000000000001px;line-height:20px;font-size:15px;color:#1a1a1a;white-space:nowrap;">City, State, Zip Code</div><div class="a" style="left:461.4px;top:-4.400000000000006px;width:62.2px;height:18px;background:rgba(38,38,38,.9);color:#fff;font-size:12px;letter-spacing:-0.399px;line-height:18px;text-align:center;white-space:nowrap;overflow:hidden">Your Name</div><div class="a" style="left:453px;top:25.5px;width:80px;height:18px;background:rgba(38,38,38,.9);color:#fff;font-size:12px;letter-spacing:-0.433px;line-height:18px;text-align:center;white-space:nowrap;overflow:hidden">Address Line 1</div><div class="a" style="left:453px;top:54.5px;width:80px;height:18px;background:rgba(38,38,38,.9);color:#fff;font-size:12px;letter-spacing:-0.433px;line-height:18px;text-align:center;white-space:nowrap;overflow:hidden">Address Line 2</div><div class="a" style="left:438px;top:84.5px;width:111px;height:18px;background:rgba(38,38,38,.9);color:#fff;font-size:12px;letter-spacing:-0.23px;line-height:18px;text-align:center;white-space:nowrap;overflow:hidden">City, State, Zip Code</div><div class="a" style="left:211px;width:150px;text-align:right;top:-4.5px;line-height:20px;font-size:16.67px;color:#222;white-space:nowrap">From</div><div class="a" style="left:211px;width:150px;text-align:right;top:151.5px;line-height:20px;font-size:16.67px;color:#222;white-space:nowrap">Invoice ID</div><div class="a" style="left:211px;width:150px;text-align:right;top:187.5px;line-height:20px;font-size:16.67px;color:#222;white-space:nowrap">Issue Date</div><div class="a" style="left:211px;width:150px;text-align:right;top:228.5px;line-height:20px;font-size:16.67px;color:#222;white-space:nowrap">PO Number</div><div class="a" style="left:211px;width:150px;text-align:right;top:265.5px;line-height:20px;font-size:16.67px;color:#222;white-space:nowrap">Due Date</div><div class="a" style="left:375px;top:184px;width:237px;height:26px;border:2px solid #000;background:#fff;"></div><div class="a" style="left:375px;top:223px;width:237px;height:27px;border:2px solid #000;background:#fff;"></div><div class="a" style="left:375px;top:261px;width:237px;height:27px;border:2px solid #000;background:#fff;"></div><div class="a" style="left:465px;top:188px;width:56px;height:18px;background:rgba(38,38,38,.9);color:#fff;font-size:12px;letter-spacing:-0.738px;line-height:18px;text-align:center;white-space:nowrap;overflow:hidden">Issue Date</div><div class="a" style="left:459.4px;top:227px;width:67.6px;height:18px;background:rgba(38,38,38,.9);color:#fff;font-size:12px;letter-spacing:-0.207px;line-height:18px;text-align:center;white-space:nowrap;overflow:hidden">PO Number</div><div class="a" style="left:466.6px;top:265px;width:52.4px;height:18px;background:rgba(38,38,38,.9);color:#fff;font-size:12px;letter-spacing:-0.525px;line-height:18px;text-align:center;white-space:nowrap;overflow:hidden">Due Date</div><div class="a" style="left:375px;top:146px;width:236px;height:29px;background:#fff;border-top:3px solid #5a9ae4;border-bottom:3px solid #5a9ae4;border-left:1px solid #5a9ae4;border-right:1px solid #5a9ae4"></div><div class="a" style="left:375px;top:146px;width:236px;height:3px;background:repeating-linear-gradient(135deg,rgba(255,255,255,.6) 0 .8px,transparent .8px 2.1px)"></div><div class="a" style="left:375px;top:172px;width:236px;height:3px;background:repeating-linear-gradient(135deg,rgba(255,255,255,.6) 0 .8px,transparent .8px 2.1px)"></div><div class="a" style="left:465.4px;top:151.39999999999998px;width:55.4px;height:18px;background:#4d9cf2;color:#fff;font-size:12px;letter-spacing:-0.336px;line-height:18px;text-align:center;white-space:nowrap;overflow:hidden">Invoice ID</div><div class="a" style="left:488px;top:156px;width:11px;height:11px;border:1px solid #3a6ab0;border-radius:6px"></div><div class="a" style="left:370.5px;top:143.0px;width:10px;height:10px;background:linear-gradient(#fde48a,#f8cf50);border:1px solid #3a3220;border-radius:2.500px"></div><div class="a" style="left:606.0px;top:143.0px;width:10px;height:10px;background:linear-gradient(#fde48a,#f8cf50);border:1px solid #3a3220;border-radius:2.500px"></div><div class="a" style="left:370.5px;top:168.5px;width:10px;height:10px;background:linear-gradient(#fde48a,#f8cf50);border:1px solid #3a3220;border-radius:2.500px"></div><div class="a" style="left:606.0px;top:168.5px;width:10px;height:10px;background:linear-gradient(#fde48a,#f8cf50);border:1px solid #3a3220;border-radius:2.500px"></div><div class="a" style="left:489.5px;top:144.0px;width:8px;height:8px;background:linear-gradient(#fde48a,#f8cf50);border:1px solid #3a3220;border-radius:2.500px"></div><div class="a" style="left:489.5px;top:169.5px;width:8px;height:8px;background:linear-gradient(#fde48a,#f8cf50);border:1px solid #3a3220;border-radius:2.500px"></div><div class="a" style="left:371.5px;top:156.5px;width:8px;height:8px;background:linear-gradient(#fde48a,#f8cf50);border:1px solid #3a3220;border-radius:2.500px"></div><div class="a" style="left:607.0px;top:156.5px;width:8px;height:8px;background:linear-gradient(#fde48a,#f8cf50);border:1px solid #3a3220;border-radius:2.500px"></div><div class="a" style="left:450.5px;top:180.5px;width:68.500px;height:23px;background:#ffffe4;border:1px solid #9a9a9a;border-radius:3px;font-size:13.330px;line-height:21px;text-align:center;color:#111;box-shadow:1px 1px 2px rgba(0,0,0,.3)">Invoice ID</div><div class="a" style="left:-74px;top:148px;width:191px;height:26px;border:2px solid #000;background:#fff;"></div><div class="a" style="left:-74px;top:178px;width:191px;height:26px;border:2px solid #000;background:#fff;"></div><div class="a" style="left:-74px;top:209px;width:191px;height:26px;border:2px solid #000;background:#fff;"></div><div class="a" style="left:-74px;top:239px;width:192px;height:26px;border:2px solid #000;background:#fff;"></div><div class="a" style="left:-112.80000000000001px;top:151.5px;width:150px;height:18px;background:rgba(38,38,38,.9);color:#fff;font-size:12px;letter-spacing:-0.179px;line-height:18px;text-align:right;padding-right:2.500px;white-space:nowrap;overflow:hidden">Client's Name</div><div class="a" style="left:-94.30000000000001px;top:181.5px;width:150px;height:18px;background:rgba(38,38,38,.9);color:#fff;font-size:12px;letter-spacing:-0.433px;line-height:18px;text-align:right;padding-right:2.500px;white-space:nowrap;overflow:hidden">Address Line 1</div><div class="a" style="left:-94.30000000000001px;top:212px;width:150px;height:18px;background:rgba(38,38,38,.9);color:#fff;font-size:12px;letter-spacing:-0.433px;line-height:18px;text-align:right;padding-right:2.500px;white-space:nowrap;overflow:hidden">Address Line 2</div><div class="a" style="left:-78.30000000000001px;top:242.60000000000002px;width:150px;height:18px;background:rgba(38,38,38,.9);color:#fff;font-size:12px;letter-spacing:-0.23px;line-height:18px;text-align:right;padding-right:2.500px;white-space:nowrap;overflow:hidden">City, State, Zip Code</div><div class="a" style="left:-74px;top:361px;width:690px;height:26px;border:2px solid #000;background:#fff;"></div><div class="a" style="left:226.10000000000002px;top:364.5px;width:42.6px;height:18px;background:rgba(38,38,38,.9);color:#fff;font-size:12px;letter-spacing:-0.362px;line-height:18px;text-align:center;white-space:nowrap;overflow:hidden">Subject</div><div class="a" style="left:269px;top:426px;width:1px;height:12px;background:#000"></div><div class="a" style="left:371px;top:426px;width:1px;height:12px;background:#000"></div><div class="a" style="left:496px;top:426px;width:1px;height:12px;background:#000"></div></div><div class="a" style="left:868px;top:214px;width:6px;height:437px;background:linear-gradient(90deg,#444,#6a6a6a 30%,#6e6e6e)"></div><div class="a" style="left:874px;top:214px;width:14px;height:437px;background:linear-gradient(90deg,#d6d6d6,#c8c8c8 60%,#bcbcbc);border-right:1px solid #6e6e6e"></div><div class="a" style="left:874px;top:215px;width:14px;height:15px;background:linear-gradient(#fff,#ececec);border:1px solid #c4c4c4;border-radius:2px"></div><svg style="left:874px;top:215px" width="14" height="15" viewBox="0 0 14 15"><path d="M7.0 5.0l-4 4.500h8z" fill="#606060"/></svg><div class="a" style="left:874px;top:635px;width:14px;height:15px;background:linear-gradient(#fff,#ececec);border:1px solid #c4c4c4;border-radius:2px"></div><svg style="left:874px;top:635px" width="14" height="15" viewBox="0 0 14 15"><path d="M7.0 10.0l-4-4.500h8z" fill="#606060"/></svg><div class="a" style="left:874px;top:278px;width:14px;height:130px;background:linear-gradient(90deg,#fff,#e6e6e6);border:1px solid #bdbdbd;border-radius:2px"></div><svg style="left:878px;top:339px" width="7" height="7" viewBox="0 0 7 7"><path d="M0 .5h7M0 3.500h7M0 6.500h7" stroke="#666"/></svg><div class="a" style="left:173px;top:651px;width:700px;height:15px;background:linear-gradient(#d2d2d2,#c4c4c4 60%,#b6b6b6);border-top:1px solid #555;border-bottom:1px solid #6a6a6a"></div><div class="a" style="left:174px;top:652px;width:13px;height:13px;background:linear-gradient(#fff,#ececec);border:1px solid #c4c4c4;border-radius:2px"></div><svg style="left:174px;top:652px" width="13" height="13" viewBox="0 0 13 13"><path d="M4.0 6.5l4.500-4v8z" fill="#606060"/></svg><div class="a" style="left:858px;top:652px;width:13px;height:13px;background:linear-gradient(#fff,#ececec);border:1px solid #c4c4c4;border-radius:2px"></div><svg style="left:858px;top:652px" width="13" height="13" viewBox="0 0 13 13"><path d="M9.0 6.5l-4.500-4v8z" fill="#606060"/></svg><div class="a" style="left:404px;top:652px;width:454px;height:13px;background:linear-gradient(#fff,#e6e6e6);border:1px solid #bdbdbd;border-radius:2px"></div><svg style="left:627px;top:655.5px" width="7" height="7" viewBox="0 0 7 7"><path d="M.5 0v7M3.500 0v7M6.500 0v7" stroke="#666"/></svg><div class="a" style="left:173px;top:665px;width:706px;height:31px;background:linear-gradient(#eeeeee,#dedede);border-top:1px solid #f8f8f8"></div><div class="a" style="left:879px;top:665px;width:9px;height:31px;background:#a6a6a6"></div><svg style="left:880px;top:667px" width="7" height="7" viewBox="0 0 7 7"><path d="M0 6.500h7" stroke="#fff"/><path d="M3.500 5L0 1h7z" fill="#fff"/></svg><svg style="left:176px;top:669px" width="7" height="17"><rect width="7" height="17" fill="url(#dots)"/></svg><svg style="left:176px;top:687px" width="7" height="8"><path d="M0.5 0v8" stroke="#8a8a8a" fill="none"/><path d="M6 0.5L2 4l4 3.5z" fill="#8a8a8a"/></svg><svg style="left:185px;top:669px" width="26" height="24" viewBox="0 0 26 24"><path d="M16.0 7.2L16.0 8.8L13.7 9.5L13.2 10.6L14.4 12.7L13.2 13.9L11.1 12.7L10.0 13.2L9.3 15.5L7.7 15.5L7.0 13.2L5.9 12.7L3.8 13.9L2.6 12.7L3.8 10.6L3.3 9.5L1.0 8.8L1.0 7.2L3.3 6.5L3.8 5.4L2.6 3.3L3.8 2.1L5.9 3.3L7.0 2.8L7.7 0.5L9.3 0.5L10.0 2.8L11.1 3.3L13.2 2.1L14.4 3.3L13.2 5.4L13.7 6.5z" fill="#cfcfcf" stroke="#8e8e8e" stroke-width=".9"/><circle cx="8.5" cy="8" r="3.8" fill="none" stroke="#b4b4b4" stroke-width=".8"/><circle cx="8.5" cy="8" r="1.8" fill="#efefef" stroke="#8e8e8e" stroke-width=".8"/><path d="M24.0 15.2L24.0 16.8L21.7 17.5L21.2 18.6L22.4 20.7L21.2 21.9L19.1 20.7L18.0 21.2L17.3 23.5L15.7 23.5L15.0 21.2L13.9 20.7L11.8 21.9L10.6 20.7L11.8 18.6L11.3 17.5L9.0 16.8L9.0 15.2L11.3 14.5L11.8 13.4L10.6 11.3L11.8 10.1L13.9 11.3L15.0 10.8L15.7 8.5L17.3 8.5L18.0 10.8L19.1 11.3L21.2 10.1L22.4 11.3L21.2 13.4L21.7 14.5z" fill="#cfcfcf" stroke="#8e8e8e" stroke-width=".9"/><circle cx="16.5" cy="16" r="3.8" fill="none" stroke="#b4b4b4" stroke-width=".8"/><circle cx="16.5" cy="16" r="1.8" fill="#efefef" stroke="#8e8e8e" stroke-width=".8"/></svg><div class="t" style="left:212.8px;top:674px;;letter-spacing:-0.136px">Options...</div><div class="dd" style="left:270px;top:680px;border-top-color:#444"></div><div class="sep" style="left:280px;top:668px;height:28px"></div><svg style="left:286px;top:673px" width="17" height="16" viewBox="0 0 17 16"><path d="M2.500 15V4.500H15" fill="none" stroke="#111" stroke-width="1.300"/><path d="M2.500 15.500l-2.500-3.500h5zM16.500 4.500l-3.500-2.500v5z" fill="#111"/><path d="M5 14.500h9.500V7" fill="none" stroke="#111" stroke-dasharray="1 1"/></svg><div class="t" style="left:303.3px;top:668px;;letter-spacing:-0.033px">W: 612.0pt</div><div class="t" style="left:304.5px;top:681.6px;;letter-spacing:0.092px">H: 792.0pt</div><div class="sep" style="left:365px;top:668px;height:28px"></div><svg style="left:371px;top:674px" width="14" height="14" viewBox="0 0 14 14"><path d="M5.500 0v11M0 5.500h11" stroke="#111" stroke-width="1.200"/><path d="M6.500 6.500l6 6-3 .2-1 2.800z" fill="#111"/></svg><div class="t" style="left:387px;top:668px;;letter-spacing:-0.241px">X : 466.2pt</div><div class="t" style="left:387px;top:681.6px;;letter-spacing:-0.221px">Y : 184.8pt</div><svg style="left:449px;top:669px" width="7" height="17"><rect width="7" height="17" fill="url(#dots)"/></svg><svg style="left:449px;top:687px" width="7" height="8"><path d="M0.5 0v8" stroke="#8a8a8a" fill="none"/><path d="M6 0.5L2 4l4 3.5z" fill="#8a8a8a"/></svg><svg style="left:463.5px;top:670.5px" width="24" height="19" viewBox="0 0 24 19"><g><path d="M1 9.500L10 1v4.500h9.500l4 3v6.500H10V18z" fill="#f6f6f6" stroke="#b4b4b4" stroke-width="1.300"/><rect x="-3.500" y=".5" width="3" height="18" fill="#f6f6f6" stroke="#b4b4b4"/></g></svg><svg style="left:490px;top:670.5px" width="24" height="19" viewBox="0 0 24 19"><g><path d="M1 9.500L10 1v4.500h9.500l4 3v6.500H10V18z" fill="#f6f6f6" stroke="#b4b4b4" stroke-width="1.300"/></g></svg><div class="combo" style="left:518px;top:669px;width:75px;height:23px;background:#f3f3f3"></div><div class="t" style="left:570px;top:674px;font-size:13.500px;color:#6a6a6a">1<span style="font-size:15px;vertical-align:-1px">/</span><span style="font-size:10px;vertical-align:2px;letter-spacing:0"> 1</span></div><svg style="left:597px;top:670.5px" width="24" height="19" viewBox="0 0 24 19"><g transform="translate(24,0) scale(-1,1)"><path d="M1 9.500L10 1v4.500h9.500l4 3v6.500H10V18z" fill="#f6f6f6" stroke="#b4b4b4" stroke-width="1.300"/></g></svg><svg style="left:623.5px;top:670.5px" width="24" height="19" viewBox="0 0 24 19"><g transform="translate(24,0) scale(-1,1)"><path d="M1 9.500L10 1v4.500h9.500l4 3v6.500H10V18z" fill="#f6f6f6" stroke="#b4b4b4" stroke-width="1.300"/><rect x="-3.500" y=".5" width="3" height="18" fill="#f6f6f6" stroke="#b4b4b4"/></g></svg><div class="sep" style="left:656px;top:668px;height:28px"></div><svg style="left:662px;top:670px" width="22" height="24" viewBox="0 0 22 24"><g transform="translate(2,0)"><path d="M.5 .5h12l5 5v16h-17z" fill="url(#gPage)" stroke="#9a9a9a"/><path d="M12.5 .5v5h5" fill="#f4f4f4" stroke="#9a9a9a"/><path d="M3 5h3M7 5h4M3 7.500h8M3 10h3M7 10h6M12 12.500h3M12 15h3" stroke="#666" stroke-dasharray="2 .7"/></g><path d="M.7 15l6-5.500v3.200h6v4.600h-6v3.200z" fill="url(#gGreen)" stroke="#4c8a0c" stroke-width=".9"/></svg><svg style="left:692px;top:670px" width="22" height="24" viewBox="0 0 22 24"><g opacity=".6"><g transform="translate(1,0)"><path d="M.5 .5h12l5 5v16h-17z" fill="url(#gPage)" stroke="#9a9a9a"/><path d="M12.5 .5v5h5" fill="#f4f4f4" stroke="#9a9a9a"/><path d="M3 5h3M7 5h4M3 7.500h8M3 10h3M7 10h6" stroke="#666" stroke-dasharray="2 .7"/></g><path d="M21.300 15l-6-5.500v3.200h-8v4.600h8v3.200z" fill="url(#gGreen)" stroke="#4c8a0c" stroke-width=".9"/></g></svg><svg style="left:737px;top:669px" width="7" height="17"><rect width="7" height="17" fill="url(#dots)"/></svg><svg style="left:737px;top:687px" width="7" height="8"><path d="M0.5 0v8" stroke="#8a8a8a" fill="none"/><path d="M6 0.5L2 4l4 3.5z" fill="#8a8a8a"/></svg><svg style="left:751px;top:670px" width="20" height="24" viewBox="0 0 20 24"><path d="M.5 .5h13l5 5v17h-18z" fill="url(#gPage)" stroke="#aaa"/><path d="M13.5 .5v5h5" fill="#f4f4f4" stroke="#aaa"/></svg><div class="act" style="left:776px;top:667px;width:30px;height:28px"></div><svg style="left:781px;top:669px" width="20" height="26" viewBox="0 0 20 26"><path d="M.5 .5h19v9h-19z" fill="#fff" stroke="#aaa"/><path d="M.5 9.500h19" stroke="#888" stroke-dasharray="1 1"/><path d="M.5 15.500h13l6 5v5h-19z" fill="#fff" stroke="#aaa"/><path d="M13.500 15.500v5h6" fill="none" stroke="#aaa"/><path d="M.5 25.500h19" stroke="#888" stroke-dasharray="1 1"/></svg><svg style="left:809.3px;top:675.3px" width="11" height="13" viewBox="0 0 11 13"><path d="M.5 .5h4.5l5 5v6.5h-9.5z" fill="url(#gPage)" stroke="#a8a8a8"/><path d="M5.0 .5v5h5" fill="#f4f4f4" stroke="#a8a8a8"/></svg><svg style="left:822.6px;top:675.3px" width="11" height="13" viewBox="0 0 11 13"><path d="M.5 .5h4.5l5 5v6.5h-9.5z" fill="url(#gPage)" stroke="#a8a8a8"/><path d="M5.0 .5v5h5" fill="#f4f4f4" stroke="#a8a8a8"/></svg><svg style="left:839.5px;top:669px" width="11" height="11" viewBox="0 0 11 11"><path d="M.5 .5v10h10v-10" fill="url(#gPage)" stroke="#a8a8a8"/><path d="M.5 .5h10" stroke="#999" stroke-dasharray="1 1"/></svg><svg style="left:839.5px;top:682px" width="11" height="11" viewBox="0 0 11 11"><path d="M.5 10.500v-10h6l4 3.500v6.500" fill="url(#gPage)" stroke="#a8a8a8"/><path d="M6.500 .5v3.500h4" fill="none" stroke="#a8a8a8"/><path d="M.5 10.500h10" stroke="#999" stroke-dasharray="1 1"/></svg><svg style="left:852.5px;top:669px" width="11" height="11" viewBox="0 0 11 11"><path d="M.5 .5v10h10v-10" fill="url(#gPage)" stroke="#a8a8a8"/><path d="M.5 .5h10" stroke="#999" stroke-dasharray="1 1"/></svg><svg style="left:852.5px;top:682px" width="11" height="11" viewBox="0 0 11 11"><path d="M.5 10.500v-10h6l4 3.500v6.500" fill="url(#gPage)" stroke="#a8a8a8"/><path d="M6.500 .5v3.500h4" fill="none" stroke="#a8a8a8"/><path d="M.5 10.500h10" stroke="#999" stroke-dasharray="1 1"/></svg><div class="a" style="left:868px;top:667px;width:10px;height:27px;background:#f0f0f0;border:1px solid #d0d0d0;border-radius:2px"></div><svg style="left:869.5px;top:669px" width="7" height="16"><rect width="7" height="16" fill="url(#dots)"/></svg><svg style="left:869.5px;top:686px" width="7" height="8" viewBox="0 0 7 8"><path d="M.5 0v8" stroke="#444" fill="none"/><path d="M2 .5L6 4l-4 3.500z" fill="#444"/></svg>
<div class="a" style="left:900px;top:152px;width:267px;height:547px;background:#fff;border-radius:3px 3px 0 0"></div><div class="a" style="left:900px;top:152px;width:267px;height:22px;background:linear-gradient(#fafafa,#efefef);border-radius:3px 3px 0 0"></div><div class="t" style="left:905px;top:156px;;letter-spacing:-0.104px">Widget Properties</div><svg style="left:1155.1px;top:157.7px" width="7" height="7" viewBox="0 0 7 7"><path d="M.8 .8l5.400 5.400M6.200 .8L.8 6.200" stroke="#222" stroke-width="1.150"/></svg><div class="a" style="left:903px;top:174px;width:248px;height:524px;background:#fff;border-top:1px solid #a8a8a8;border-left:1px solid #d0d0d0;overflow:hidden"><div class="a" style="left:90px;top:21px;width:1px;height:503px;background:#e4e4e4"></div><div class="a" style="left:0;top:0px;width:248px;height:21px;background:linear-gradient(#fafafa,#ececec);border-bottom:1px solid #dcdcdc"></div><svg style="left:1px;top:6px" width="7" height="7" viewBox="0 0 7 7"><path d="M6.500 .5v6h-6z" fill="#333"/></svg><div class="t" style="left:12.300px;top:3px;font-weight:bold;color:#666;letter-spacing:-0.186px">General</div><div class="a" style="left:0;top:21px;width:248px;height:23px;border-bottom:1px solid #e4e4e4"></div><div class="t" style="left:0;width:87.300px;text-align:right;top:25px;color:#6e6e6e;letter-spacing:-0.456px">Read Only</div><div class="t" style="left:93px;top:25px;color:#000;letter-spacing:0.078px">No</div><div class="a" style="left:0;top:44px;width:248px;height:23px;border-bottom:1px solid #e4e4e4"></div><div class="t" style="left:0;width:87.300px;text-align:right;top:48px;color:#6e6e6e;letter-spacing:-0.334px">Locked</div><div class="t" style="left:93px;top:48px;color:#000;letter-spacing:0.078px">No</div><div class="a" style="left:0;top:67px;width:248px;height:23px;border-bottom:1px solid #e4e4e4"></div><div class="t" style="left:0;width:87.300px;text-align:right;top:71px;color:#6e6e6e;letter-spacing:-0.276px">Field Name</div><div class="t" style="left:93px;top:71px;color:#000;letter-spacing:-0.156px">Invoice ID</div><div class="a" style="left:0;top:90px;width:248px;height:23px;border-bottom:1px solid #e4e4e4"></div><div class="t" style="left:0;width:87.300px;text-align:right;top:94px;color:#6e6e6e;letter-spacing:0.116px">Tooltip</div><div class="t" style="left:93px;top:94px;color:#000;letter-spacing:-0.156px">Invoice ID</div><div class="a" style="left:0;top:113px;width:248px;height:23px;border-bottom:1px solid #e4e4e4"></div><div class="t" style="left:0;width:87.300px;text-align:right;top:117px;color:#6e6e6e;letter-spacing:0.027px">Mapping Name</div><div class="t" style="left:93px;top:117px;color:#8a8a8a;letter-spacing:-0.161px">&lt;Not Set&gt;</div><div class="a" style="left:0;top:136px;width:248px;height:23px;border-bottom:1px solid #e4e4e4"></div><div class="t" style="left:0;width:87.300px;text-align:right;top:140px;color:#6e6e6e;letter-spacing:-0.009px">Orientation</div><div class="t" style="left:93px;top:140px;color:#000">0</div><div class="a" style="left:0;top:159px;width:248px;height:23px;border-bottom:1px solid #e4e4e4"></div><div class="t" style="left:0;width:87.300px;text-align:right;top:163px;color:#6e6e6e;letter-spacing:0.027px">Visibility</div><div class="t" style="left:93px;top:163px;color:#000;letter-spacing:-0.12px">Visible</div><div class="a" style="left:0;top:182px;width:248px;height:23px;border-bottom:1px solid #e4e4e4"></div><div class="t" style="left:0;width:87.300px;text-align:right;top:186px;color:#6e6e6e;letter-spacing:-0.363px">Required</div><div class="t" style="left:93px;top:186px;color:#000;letter-spacing:0.078px">No</div><div class="a" style="left:0;top:205px;width:248px;height:23px;border-bottom:1px solid #e4e4e4"></div><div class="t" style="left:0;width:87.300px;text-align:right;top:209px;color:#6e6e6e;letter-spacing:-0.358px">Exportable</div><div class="t" style="left:93px;top:209px;color:#000;letter-spacing:-0.959px">Yes</div><div class="a" style="left:0;top:228px;width:248px;height:21px;background:linear-gradient(#fafafa,#ececec);border-bottom:1px solid #dcdcdc"></div><svg style="left:1px;top:234px" width="7" height="7" viewBox="0 0 7 7"><path d="M6.500 .5v6h-6z" fill="#333"/></svg><div class="t" style="left:12.300px;top:231px;font-weight:bold;color:#666;letter-spacing:-0.237px">Style</div><div class="a" style="left:0;top:249px;width:248px;height:23px;border-bottom:1px solid #e4e4e4"></div><div class="t" style="left:0;width:87.300px;text-align:right;top:253px;color:#6e6e6e;letter-spacing:-0.084px">Fill Color</div><div class="a" style="left:94px;top:252px;width:16px;height:16px;border:1px solid #8a8a8a;border-radius:2px;background:#fff"></div><div class="t" style="left:113px;top:253px;color:#000;letter-spacing:-0.585px">255,255,255</div><div class="a" style="left:0;top:272px;width:248px;height:23px;border-bottom:1px solid #e4e4e4"></div><div class="t" style="left:0;width:87.300px;text-align:right;top:276px;color:#6e6e6e;letter-spacing:-0.142px">Stroke Color</div><div class="a" style="left:94px;top:274px;width:18px;height:18px;border:1px solid #c4c4c4;border-radius:3px;background:#fff"></div><svg style="left:108px;top:282px" width="6" height="6" viewBox="0 0 6 6"><path d="M.5 .5l5 5M5.500 .5l-5 5" stroke="#666" stroke-width="1.300"/></svg><div class="t" style="left:120px;top:276px;color:#000;letter-spacing:0.153px">None</div><div class="a" style="left:0;top:295px;width:248px;height:23px;border-bottom:1px solid #e4e4e4"></div><div class="t" style="left:0;width:87.300px;text-align:right;top:299px;color:#6e6e6e;letter-spacing:-0.253px">Border Style</div><div class="a" style="left:94px;top:306px;width:34px;height:1px;background:#111"></div><div class="t" style="left:132px;top:299px;color:#000;letter-spacing:-0.338px">Solid</div><div class="a" style="left:0;top:318px;width:248px;height:23px;border-bottom:1px solid #e4e4e4"></div><div class="t" style="left:0;width:87.300px;text-align:right;top:322px;color:#6e6e6e;letter-spacing:-0.053px">Border Width</div><div class="a" style="left:95px;top:329px;width:15px;height:1px;background:#333"></div><div class="t" style="left:114px;top:322px;color:#000;letter-spacing:-0.054px">1 pt</div><div class="a" style="left:0;top:341px;width:248px;height:21px;background:linear-gradient(#fafafa,#ececec);border-bottom:1px solid #dcdcdc"></div><svg style="left:1px;top:347px" width="7" height="7" viewBox="0 0 7 7"><path d="M6.500 .5v6h-6z" fill="#333"/></svg><div class="t" style="left:12.300px;top:344px;font-weight:bold;color:#666;letter-spacing:-0.543px">Position</div><div class="a" style="left:0;top:362px;width:248px;height:23px;border-bottom:1px solid #e4e4e4"></div><div class="t" style="left:0;width:87.300px;text-align:right;top:366px;color:#6e6e6e;letter-spacing:-0.154px">Left</div><div class="t" style="left:93px;top:366px;color:#000;letter-spacing:-0.312px">421 pt</div><div class="a" style="left:0;top:385px;width:248px;height:23px;border-bottom:1px solid #e4e4e4"></div><div class="t" style="left:0;width:87.300px;text-align:right;top:389px;color:#6e6e6e;letter-spacing:-0.286px">Top</div><div class="t" style="left:93px;top:389px;color:#000;letter-spacing:-0.297px">616.1 pt</div><div class="a" style="left:0;top:408px;width:248px;height:23px;border-bottom:1px solid #e4e4e4"></div><div class="t" style="left:0;width:87.300px;text-align:right;top:412px;color:#6e6e6e;letter-spacing:0.163px">Width</div><div class="t" style="left:93px;top:412px;color:#000;letter-spacing:-0.312px">141 pt</div><div class="a" style="left:0;top:431px;width:248px;height:23px;border-bottom:1px solid #e4e4e4"></div><div class="t" style="left:0;width:87.300px;text-align:right;top:435px;color:#6e6e6e;letter-spacing:0.185px">Height</div><div class="t" style="left:93px;top:435px;color:#000;letter-spacing:-0.315px">15.4 pt</div><div class="a" style="left:0;top:454px;width:248px;height:21px;background:linear-gradient(#fafafa,#ececec);border-bottom:1px solid #dcdcdc"></div><svg style="left:1px;top:460px" width="7" height="7" viewBox="0 0 7 7"><path d="M6.500 .5v6h-6z" fill="#333"/></svg><div class="t" style="left:12.300px;top:457px;font-weight:bold;color:#666;letter-spacing:0.011px">Default Text Format</div><div class="a" style="left:0;top:475px;width:248px;height:23px;border-bottom:1px solid #e4e4e4"></div><div class="t" style="left:0;width:87.300px;text-align:right;top:479px;color:#6e6e6e">Font</div><div class="t" style="left:93px;top:479px;color:#000;letter-spacing:-0.003px">Arial</div><div class="a" style="left:0;top:498px;width:248px;height:23px;border-bottom:1px solid #e4e4e4"></div><div class="t" style="left:0;width:87.300px;text-align:right;top:502px;color:#6e6e6e">Font Size</div><div class="t" style="left:93px;top:502px;color:#000">9 pt</div></div><div class="a" style="left:1151px;top:175px;width:14px;height:523px;background:linear-gradient(90deg,#b4b4b4,#c6c6c6 40%,#b2b2b2);border-left:1px solid #8a8a8a"></div><div class="a" style="left:1151px;top:175px;width:14px;height:14px;background:linear-gradient(#fff,#ececec);border:1px solid #c4c4c4;border-radius:2px"></div><svg style="left:1151px;top:175px" width="14" height="14" viewBox="0 0 14 14"><path d="M7.0 4.5l-4 4.500h8z" fill="#606060"/></svg><div class="a" style="left:1151px;top:684px;width:14px;height:14px;background:linear-gradient(#fff,#ececec);border:1px solid #c4c4c4;border-radius:2px"></div><svg style="left:1151px;top:684px" width="14" height="14" viewBox="0 0 14 14"><path d="M7.0 9.5l-4-4.500h8z" fill="#606060"/></svg><div class="a" style="left:1151px;top:189px;width:14px;height:240px;background:linear-gradient(90deg,#fff,#e8e8e8);border:1px solid #c0c0c0;border-radius:2px"></div><svg style="left:1155px;top:305px" width="7" height="7" viewBox="0 0 7 7"><path d="M0 .5h7M0 3.500h7M0 6.500h7" stroke="#666"/></svg>
</body></html>
